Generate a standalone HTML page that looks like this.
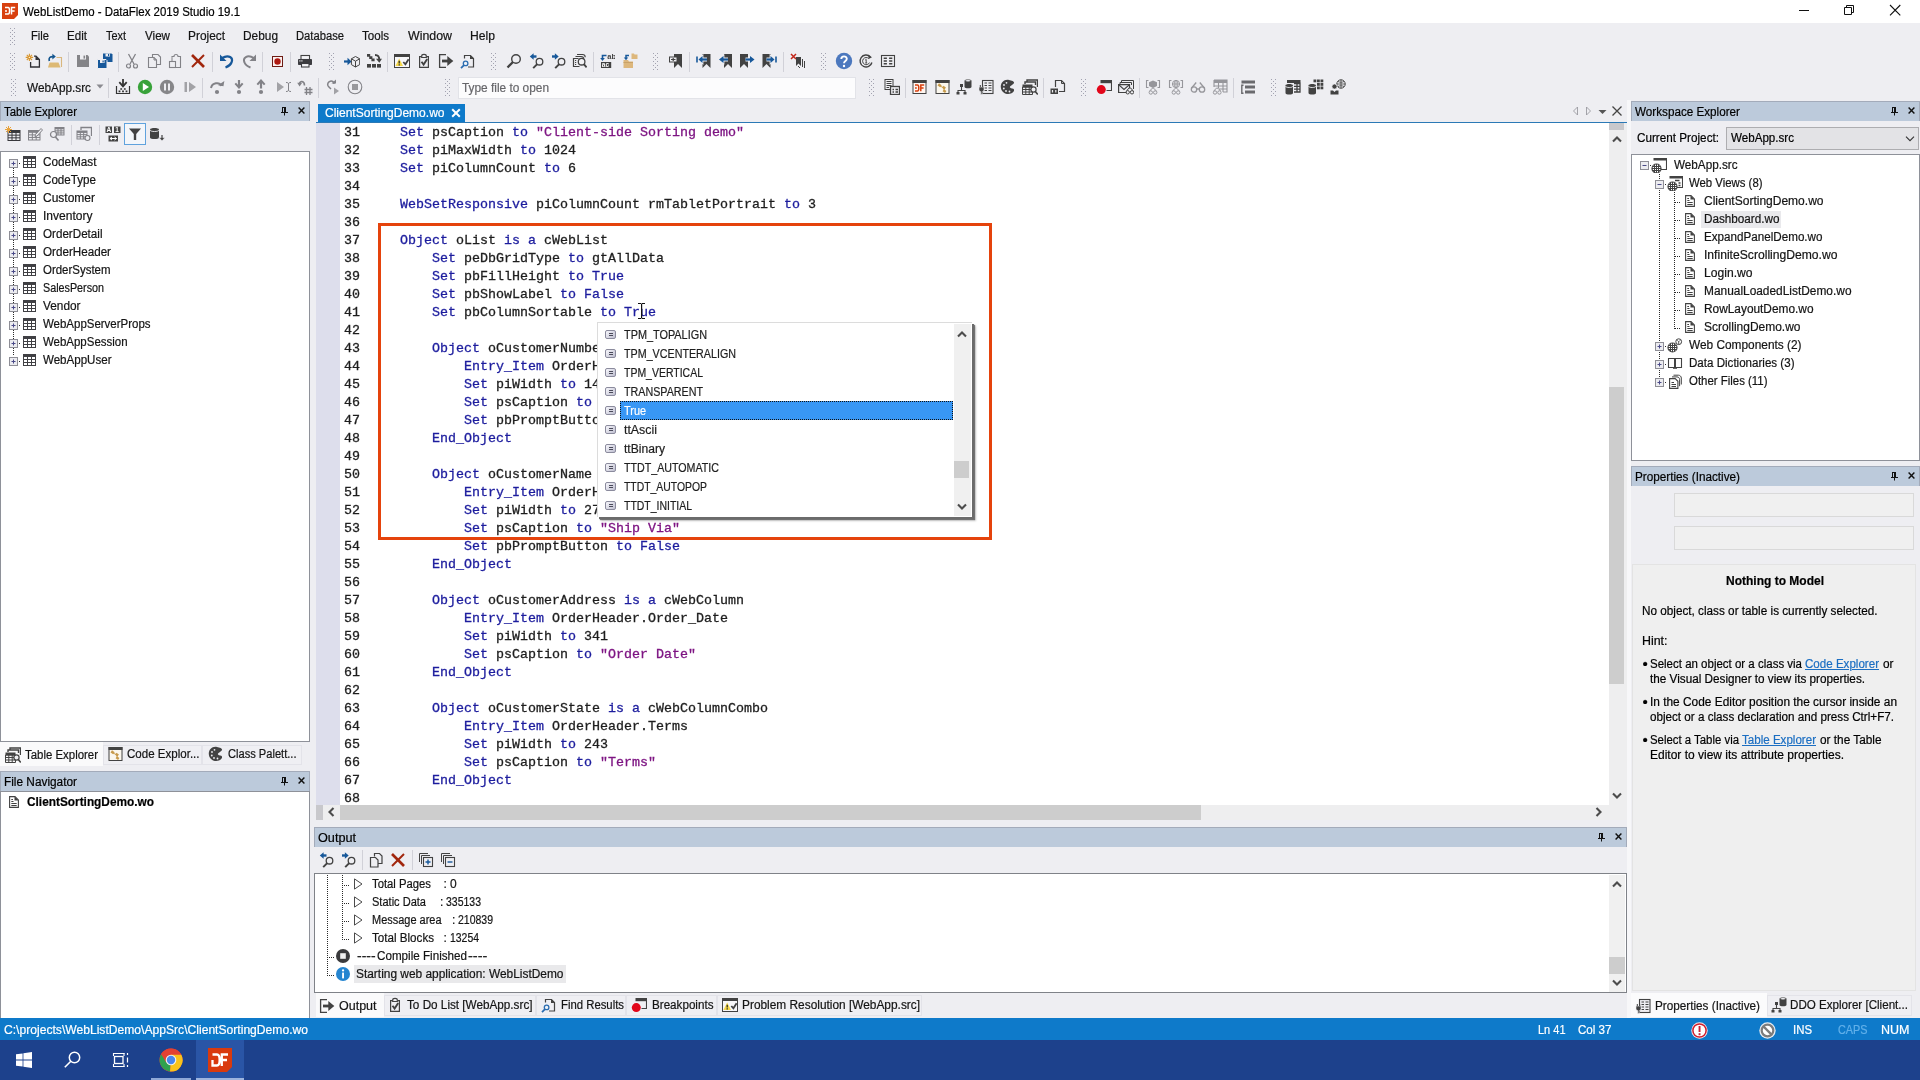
<!DOCTYPE html>
<html><head><meta charset="utf-8"><title>WebListDemo - DataFlex 2019 Studio 19.1</title>
<style>
html,body{margin:0;padding:0}
body{width:1920px;height:1080px;overflow:hidden;position:relative;background:#EEEEF2;font:12px 'Liberation Sans',sans-serif;color:#141414}
#root{position:absolute;left:0;top:0;width:1920px;height:1080px;will-change:transform}
.a{position:absolute;display:block}
.t{position:absolute;white-space:pre;line-height:18px;height:18px;font:12px 'Liberation Sans',sans-serif;line-height:18px;-webkit-text-stroke:0.2px;transform-origin:0 50%}
.c{position:absolute;white-space:pre;font:13.333px 'Liberation Mono',monospace;line-height:18px;height:18px;color:#1E1E1E;-webkit-text-stroke:0.3px}
.aci{width:11px;height:9px;box-sizing:border-box;border:1px solid #8B8B9D;border-radius:2px;background:linear-gradient(#4A4A5A,#4A4A5A) 3px 2px/4px 1px no-repeat,linear-gradient(#4A4A5A,#4A4A5A) 3px 4px/4px 1px no-repeat,linear-gradient(135deg,#F7F7FC,#BFBFD0)}
.grip{width:5px;background-image:radial-gradient(circle at .5px .5px,#A2A2B0 .65px,transparent .8px),radial-gradient(circle at 2.5px 2.5px,#A2A2B0 .65px,transparent .8px);background-size:4px 4px;}
.vdot{width:1px;background-image:repeating-linear-gradient(180deg,#2a2a2a 0,#2a2a2a 1px,transparent 1px,transparent 2px)}
.hdot{height:1px;background-image:repeating-linear-gradient(90deg,#2a2a2a 0,#2a2a2a 1px,transparent 1px,transparent 2px)}
</style></head>
<body>
<div id="root">
<div class="a" style="left:0px;top:0px;width:1920px;height:23px;background:#FFFFFF;"></div>
<svg class="a" style="left:2px;top:3px" width="16" height="16" viewBox="0 0 16 16"><path d="M0 0H16V12L12 16H0Z" fill="#D8400F"/><path d="M3 4.5H6.2C8 4.5 8 11 6.2 11H3M3 8H5 M9.5 11.5V4.5H13.2M9.5 8H12.6" stroke="#fff" stroke-width="1.5" fill="none"/></svg>
<span class="t" style="left:23px;top:3px;color:#000;transform:scaleX(0.9521);">WebListDemo - DataFlex 2019 Studio 19.1</span>
<svg class="a" style="left:1790px;top:0" width="120" height="23" viewBox="0 0 120 23"><path d="M9 10.5H19" stroke="#111" stroke-width="1"/><path d="M54.5 7.5H61.5V14.5H54.5Z M56.5 7.5V5.5H63.5V12.5H61.5" stroke="#111" fill="none"/><path d="M100 5L110.3 15.3M110.3 5L100 15.3" stroke="#111" stroke-width="1.1"/></svg>
<div class="a grip" style="left:10px;top:28px;height:18px"></div>
<span class="t" style="left:31px;top:27px;transform:scaleX(0.9305);">File</span>
<span class="t" style="left:67px;top:27px;transform:scaleX(0.9668);">Edit</span>
<span class="t" style="left:106px;top:27px;transform:scaleX(0.9084);">Text</span>
<span class="t" style="left:145px;top:27px;transform:scaleX(0.9691);">View</span>
<span class="t" style="left:188px;top:27px;transform:scaleX(0.9904);">Project</span>
<span class="t" style="left:243px;top:27px;transform:scaleX(0.9894);">Debug</span>
<span class="t" style="left:296px;top:27px;transform:scaleX(0.9343);">Database</span>
<span class="t" style="left:362px;top:27px;transform:scaleX(0.9637);">Tools</span>
<span class="t" style="left:408px;top:27px;transform:scaleX(1.0307);">Window</span>
<span class="t" style="left:470px;top:27px;transform:scaleX(1.0127);">Help</span>
<div class="a grip" style="left:10px;top:53px;height:18px"></div>
<svg class="a" style="left:25px;top:53px" width="16" height="16" viewBox="0 0 16 16"><path d="M5.6 9V14H14.4V6.5L11 3.2H9" fill="none" stroke="#303036" stroke-width="1.3"/><path d="M10.5 3V7H14.5Z" fill="#303036"/><path d="M4.4 0.7V8.1M0.7 4.4H8.1M1.8 1.8L7 7M7 1.8L1.8 7" stroke="#D9962F" stroke-width="1.1"/><circle cx="4.4" cy="4.4" r="1.6" fill="#D9962F"/><circle cx="4.4" cy="4.4" r=".7" fill="#FBEFD5"/></svg>
<svg class="a" style="left:47px;top:53px" width="16" height="16" viewBox="0 0 16 16"><path d="M9.5 4.5H14.5V14" fill="none" stroke="#D9B77E" stroke-width="1.1"/><path d="M2.5 9.5H11.5L13.5 14.5H1Z" fill="#DDB974"/><path d="M2.3 8C1.5 4.5 3 3.6 6.2 3.6" fill="none" stroke="#15568F" stroke-width="1.7"/><path d="M5.4 0.8L8.8 3.6L5.4 6.4Z" fill="#15568F"/></svg>
<div class="a" style="left:68px;top:52px;width:1px;height:20px;background:#D1D1D8;"></div>
<svg class="a" style="left:75px;top:53px" width="16" height="16" viewBox="0 0 16 16"><path d="M2 2H12.5L14 3.5V14H2Z" fill="#848488"/><rect x="5" y="2" width="6" height="4.5" fill="#EEEEF2"/><rect x="8.5" y="2.6" width="1.6" height="3" fill="#848488"/></svg>
<svg class="a" style="left:97px;top:53px" width="16" height="16" viewBox="0 0 16 16"><path d="M6 0.5H14.5L15.5 1.5V9H6Z" fill="#17589A"/><rect x="8.5" y="0.5" width="4.5" height="3" fill="#EEEEF2"/><rect x="11" y="1" width="1.2" height="2" fill="#17589A"/><path d="M0.5 6.5H9L10 7.5V15.5H0.5Z" fill="#17589A" stroke="#EEEEF2" stroke-width="1"/><rect x="3" y="7" width="4.5" height="3" fill="#EEEEF2"/><rect x="5.5" y="7.5" width="1.2" height="2" fill="#17589A"/></svg>
<div class="a" style="left:118px;top:52px;width:1px;height:20px;background:#D1D1D8;"></div>
<svg class="a" style="left:124px;top:53px" width="16" height="16" viewBox="0 0 16 16"><path d="M4.5 1L10 11M11.5 1L6 11" stroke="#828287" stroke-width="1.3" fill="none"/><circle cx="4.5" cy="13" r="2" fill="none" stroke="#828287" stroke-width="1.2"/><circle cx="11.5" cy="13" r="2" fill="none" stroke="#828287" stroke-width="1.2"/></svg>
<svg class="a" style="left:147px;top:53px" width="16" height="16" viewBox="0 0 16 16"><path d="M5.5 4.5V1.5H11L13.5 4V11.5H9.5" fill="none" stroke="#828287" stroke-width="1.1"/><path d="M1.5 4.5H7L9.5 7V14.5H1.5Z" fill="none" stroke="#828287" stroke-width="1.1"/><path d="M7 4.5V7H9.5" fill="none" stroke="#828287"/></svg>
<svg class="a" style="left:168px;top:53px" width="16" height="16" viewBox="0 0 16 16"><path d="M4 4.5V3.5H6C6 0.8 10 0.8 10 3.5H12.5V14.5H8" fill="none" stroke="#828287" stroke-width="1.1"/><rect x="1.5" y="8.5" width="6" height="6" fill="none" stroke="#828287" stroke-width="1.1"/><path d="M4 8.5V4.5" stroke="#828287"/></svg>
<svg class="a" style="left:190px;top:53px" width="16" height="16" viewBox="0 0 16 16"><path d="M2 2L14 14" stroke="#A1260D" stroke-width="2.6"/><path d="M14 2L2 14" stroke="#A1260D" stroke-width="2"/></svg>
<div class="a" style="left:212px;top:52px;width:1px;height:20px;background:#D1D1D8;"></div>
<svg class="a" style="left:219px;top:53px" width="16" height="16" viewBox="0 0 16 16"><path d="M3 5C10 1 14.5 5 12.5 9.5C11.5 12 9 13.5 6.5 14.5" fill="none" stroke="#17589A" stroke-width="2.2"/><path d="M1 1.5V8H7.5Z" fill="#17589A"/></svg>
<svg class="a" style="left:241px;top:53px" width="16" height="16" viewBox="0 0 16 16"><path d="M13 5C6 1 1.5 5 3.5 9.5C4.5 12 7 13.5 9.5 14.5" fill="none" stroke="#828287" stroke-width="2"/><path d="M15 1.5V8H8.5Z" fill="#828287"/></svg>
<div class="a" style="left:262px;top:52px;width:1px;height:20px;background:#D1D1D8;"></div>
<svg class="a" style="left:269px;top:53px" width="16" height="16" viewBox="0 0 16 16"><rect x="3.5" y="3.5" width="10" height="10" fill="#FBF0EF" stroke="#6E1C15" stroke-width="1"/><circle cx="8.5" cy="8.5" r="3.2" fill="#AE1810"/></svg>
<div class="a" style="left:290px;top:52px;width:1px;height:20px;background:#D1D1D8;"></div>
<svg class="a" style="left:297px;top:53px" width="16" height="16" viewBox="0 0 16 16"><rect x="4" y="2.5" width="8.5" height="4" fill="#F4F4F7" stroke="#424242" stroke-width="1.1"/><rect x="1" y="6" width="14" height="6" rx="0.8" fill="#3C3C40"/><rect x="4.5" y="10.5" width="7.5" height="3.5" fill="#F4F4F7" stroke="#3C3C40" stroke-width="1.1"/><rect x="2.3" y="7.3" width="1.2" height="1.2" fill="#EEEEF2"/><rect x="4.3" y="7.3" width="1.2" height="1.2" fill="#EEEEF2"/></svg>
<div class="a grip" style="left:329px;top:53px;height:18px"></div>
<svg class="a" style="left:344px;top:53px" width="16" height="16" viewBox="0 0 16 16"><path d="M0 8.5H5" stroke="#17589A" stroke-width="2.2"/><path d="M3.5 4.8L7.6 8.5L3.5 12.2Z" fill="#17589A"/><path d="M11.5 3.5L15.7 5.8V11.6L11.5 14L7.4 11.6V5.8Z M7.4 5.8L11.5 8.2L15.7 5.8M11.5 8.2V14" fill="none" stroke="#424242" stroke-width="1"/></svg>
<svg class="a" style="left:366px;top:53px" width="16" height="16" viewBox="0 0 16 16"><rect x="1" y="11" width="4" height="3.6" fill="#424242"/><rect x="6" y="11" width="4" height="3.6" fill="#424242"/><rect x="11" y="11" width="4" height="3.6" fill="#424242"/><path d="M1 1H4.2V3.2H6.4V5.4H8.6V8.2H5.4V6H3.2V3.8H1Z" fill="#424242"/><path d="M9 2C12.8 2 13.3 4 13.3 7" fill="none" stroke="#424242" stroke-width="2"/><path d="M10 5.8L13.3 9.8L16 5.8Z" fill="#424242"/></svg>
<div class="a" style="left:387px;top:52px;width:1px;height:20px;background:#D1D1D8;"></div>
<svg class="a" style="left:394px;top:53px" width="16" height="16" viewBox="0 0 16 16"><rect x="0.5" y="1.5" width="15" height="13" fill="#F7F7F9" stroke="#424242" stroke-width="1"/><rect x="0" y="1" width="16" height="3" fill="#424242"/><path d="M5.2 5.5L9 13H1.4Z" fill="#F6D94B"/><path d="M5.2 7.8V10.6M5.2 11.3V12.4" stroke="#222" stroke-width="1.2"/><path d="M9.3 9L11.4 11.3L14.6 6.2" fill="none" stroke="#424242" stroke-width="1.8"/></svg>
<svg class="a" style="left:416px;top:53px" width="16" height="16" viewBox="0 0 16 16"><path d="M5.5 3.6H3.6V14.4H12.4V3.6H10.5" fill="none" stroke="#424242" stroke-width="1.2"/><path d="M5.7 4.5V3C5.7 0.8 10.3 0.8 10.3 3V4.5Z" fill="none" stroke="#424242" stroke-width="1.2"/><path d="M5.5 8.8L7.6 11.6L11.2 6" fill="none" stroke="#424242" stroke-width="1.9"/></svg>
<svg class="a" style="left:438px;top:53px" width="16" height="16" viewBox="0 0 16 16"><path d="M8 1.6H1.6V14.4H8" fill="none" stroke="#424242" stroke-width="1.3"/><path d="M4 8H11" stroke="#424242" stroke-width="2.8"/><path d="M9.3 3L15.3 8L9.3 13Z" fill="#424242"/></svg>
<svg class="a" style="left:459px;top:53px" width="16" height="16" viewBox="0 0 16 16"><path d="M5.5 5.5V2.5H11.5L14.5 5.5V14H9" fill="none" stroke="#424242" stroke-width="1.2"/><path d="M11 2.2V6H14.8Z" fill="#424242"/><circle cx="6.6" cy="10.4" r="2.3" fill="#EEF3F9" stroke="#2B6CB0" stroke-width="1.3"/><path d="M5 12.2L2 15.2" stroke="#2B6CB0" stroke-width="1.8"/></svg>
<div class="a grip" style="left:491px;top:53px;height:18px"></div>
<svg class="a" style="left:506px;top:53px" width="16" height="16" viewBox="0 0 16 16"><circle cx="10" cy="6" r="4.3" fill="none" stroke="#424242" stroke-width="1.4"/><path d="M7 9L1.5 14.5" stroke="#424242" stroke-width="2.3"/></svg>
<svg class="a" style="left:529px;top:53px" width="16" height="16" viewBox="0 0 16 16"><circle cx="10.5" cy="8.7" r="3.3" fill="none" stroke="#424242" stroke-width="1.3"/><path d="M8.2 11.2L4.2 15.2" stroke="#424242" stroke-width="1.9"/><path d="M3 3.5H7.5" stroke="#17589A" stroke-width="2.4"/><path d="M4.6 0.2L0.8 3.5L4.6 6.8Z" fill="#17589A"/></svg>
<svg class="a" style="left:551px;top:53px" width="16" height="16" viewBox="0 0 16 16"><circle cx="10.5" cy="8.7" r="3.3" fill="none" stroke="#424242" stroke-width="1.3"/><path d="M8.2 11.2L4.2 15.2" stroke="#424242" stroke-width="1.9"/><path d="M1 3.5H5.5" stroke="#17589A" stroke-width="2.4"/><path d="M3.9 0.2L7.7 3.5L3.9 6.8Z" fill="#17589A"/></svg>
<svg class="a" style="left:571px;top:53px" width="16" height="16" viewBox="0 0 16 16"><path d="M6 1.5H11.5C13 1.5 14.2 2.7 14.2 4.2" fill="none" stroke="#424242" stroke-width="1.1"/><path d="M4.5 3.5H10C11.5 3.5 12.7 4.7 12.7 6" fill="none" stroke="#424242" stroke-width="1.1"/><path d="M7.5 5.5H2.5V13.5H8.5" fill="none" stroke="#424242" stroke-width="1.2"/><path d="M4 7.5H5.2M4 9.5H5.2M4 11.5H5.2" stroke="#424242" stroke-width="1.2"/><circle cx="10.6" cy="8.7" r="3.3" fill="#F2F2F5" stroke="#424242" stroke-width="1.3"/><path d="M12.9 11.2L15.6 14.4" stroke="#424242" stroke-width="1.9"/></svg>
<div class="a" style="left:593px;top:52px;width:1px;height:20px;background:#D1D1D8;"></div>
<svg class="a" style="left:599px;top:53px" width="16" height="16" viewBox="0 0 16 16"><text x="8.3" y="6" font-family="Liberation Sans" font-weight="bold" font-size="7.5" fill="#424242">ab</text><rect x="2" y="9" width="10.2" height="6" fill="#424242"/><text x="2.8" y="14.2" font-family="Liberation Sans" font-weight="bold" font-size="6.5" fill="#fff">ac</text><path d="M7.5 2.5H3.5V6" fill="none" stroke="#17589A" stroke-width="1.6"/><path d="M1.2 5L3.5 8L5.8 5Z" fill="#17589A"/></svg>
<svg class="a" style="left:622.5px;top:53px" width="16" height="16" viewBox="0 0 16 16"><path d="M8.5 0.5H11L11.5 1.5H14.5V6H8.5Z" fill="#DDB77C"/><path d="M0.5 7H5L6 8.5H10V15H0.5Z" fill="#DDB77C"/><rect x="0.5" y="9" width="9.5" height="1" fill="#C9A268"/><path d="M6 2.5H3V5.5" fill="none" stroke="#17589A" stroke-width="1.5"/><path d="M0.8 4.5L3 7.3L5.2 4.5Z" fill="#17589A"/></svg>
<div class="a grip" style="left:653px;top:53px;height:18px"></div>
<svg class="a" style="left:668px;top:53px" width="16" height="16" viewBox="0 0 16 16"><path d="M6 1H14V15L10 11L6 15Z" fill="#424242"/><rect x="1.5" y="4" width="7.5" height="5" fill="#EEEEF2" stroke="#424242" stroke-width="1"/><path d="M3 6.5H7.5M5.2 5V8" stroke="#424242" stroke-width="1.2"/></svg>
<div class="a" style="left:689px;top:52px;width:1px;height:20px;background:#D1D1D8;"></div>
<svg class="a" style="left:696px;top:53px" width="16" height="16" viewBox="0 0 16 16"><path d="M6.5 1H14.5V15L10.5 11L6.5 15Z" fill="#424242"/><path d="M5.5 6.5H11" stroke="#EEEEF2" stroke-width="4"/><path d="M6.5 3L2.5 6.5L6.5 10Z" fill="#EEEEF2" stroke="#EEEEF2" stroke-width="1.8"/><path d="M5.5 6.5H11" stroke="#17589A" stroke-width="2.2"/><path d="M6.5 3L2.5 6.5L6.5 10Z" fill="#17589A"/><path d="M1 3.5V9.5" stroke="#17589A" stroke-width="1.6"/></svg>
<svg class="a" style="left:718px;top:53px" width="16" height="16" viewBox="0 0 16 16"><path d="M6 1H14V15L10 11L6 15Z" fill="#424242"/><path d="M4.5 6.5H10" stroke="#EEEEF2" stroke-width="4"/><path d="M5.5 3L1 6.5L5.5 10Z" fill="#EEEEF2" stroke="#EEEEF2" stroke-width="1.8"/><path d="M4.5 6.5H10" stroke="#17589A" stroke-width="2.2"/><path d="M5.5 3L1 6.5L5.5 10Z" fill="#17589A"/></svg>
<svg class="a" style="left:739px;top:53px" width="16" height="16" viewBox="0 0 16 16"><path d="M1 1H9V15L5 11L1 15Z" fill="#424242"/><path d="M6.5 6.5H12" stroke="#EEEEF2" stroke-width="4"/><path d="M11 3L15.5 6.5L11 10Z" fill="#EEEEF2" stroke="#EEEEF2" stroke-width="1.8"/><path d="M6.5 6.5H12" stroke="#17589A" stroke-width="2.2"/><path d="M11 3L15.5 6.5L11 10Z" fill="#17589A"/></svg>
<svg class="a" style="left:761px;top:53px" width="16" height="16" viewBox="0 0 16 16"><path d="M1.5 1H9.5V15L5.5 11L1.5 15Z" fill="#424242"/><path d="M5.5 6.5H11" stroke="#EEEEF2" stroke-width="4"/><path d="M9.5 3L13.5 6.5L9.5 10Z" fill="#EEEEF2" stroke="#EEEEF2" stroke-width="1.8"/><path d="M5.5 6.5H11" stroke="#17589A" stroke-width="2.2"/><path d="M9.5 3L13.5 6.5L9.5 10Z" fill="#17589A"/><path d="M15 3.5V9.5" stroke="#17589A" stroke-width="1.6"/></svg>
<div class="a" style="left:783px;top:52px;width:1px;height:20px;background:#D1D1D8;"></div>
<svg class="a" style="left:790px;top:53px" width="16" height="16" viewBox="0 0 16 16"><path d="M1 1L6 6M6 1L1 6" stroke="#C2271A" stroke-width="1.5"/><path d="M6 4H11V13L8.5 10.5L6 13Z" fill="#424242"/><path d="M12.5 6V14M14.5 8V15" stroke="#424242" stroke-width="1"/><path d="M8 13L10 15" stroke="#424242"/></svg>
<div class="a grip" style="left:821px;top:53px;height:18px"></div>
<svg class="a" style="left:835px;top:52px" width="18" height="18" viewBox="0 0 18 18"><circle cx="9" cy="9" r="8.2" fill="#4C78BE"/><path d="M6.3 7C6.3 3.5 11.8 3.5 11.8 6.8C11.8 9 9 9 9 11.3" fill="none" stroke="#fff" stroke-width="1.9"/><circle cx="9" cy="14" r="1.2" fill="#fff"/></svg>
<svg class="a" style="left:858px;top:53px" width="16" height="16" viewBox="0 0 16 16"><path d="M12.3 3.7A6 6 0 1 0 13.9 9.5" fill="none" stroke="#424242" stroke-width="1.4"/><path d="M10.8 5.6A3.6 3.6 0 1 0 11.5 9.6" fill="none" stroke="#424242" stroke-width="1"/><path d="M8.2 6.3V10M7.2 7.2L8.2 6.3M7.2 10H9.2" stroke="#424242" stroke-width=".9" fill="none"/><path d="M10.2 1.8L14 4.2L10.6 6Z" fill="#424242"/></svg>
<svg class="a" style="left:880px;top:53px" width="16" height="16" viewBox="0 0 16 16"><rect x="1.5" y="2.5" width="13" height="11" fill="none" stroke="#424242" stroke-width="1.1"/><path d="M3.7 5.3H6.9M9.1 5.3H12.3M3.7 8H6.9M9.1 8H12.3M3.7 10.7H6.9M9.1 10.7H12.3" stroke="#424242" stroke-width="1.5"/></svg>
<div class="a grip" style="left:11px;top:79px;height:18px"></div>
<span class="t" style="left:27px;top:79px;transform:scaleX(0.9825);">WebApp.src</span>
<svg class="a" style="left:96px;top:84px" width="8" height="5"><path d="M0.5 0.5H7.5L4 4.5Z" fill="#8A8A90"/></svg>
<div class="a" style="left:108px;top:78px;width:1px;height:20px;background:#D1D1D8;"></div>
<svg class="a" style="left:115px;top:79px" width="16" height="16" viewBox="0 0 16 16"><path d="M8 0V6" stroke="#333" stroke-width="1.8"/><path d="M4.3 3.2L8 7.3L11.7 3.2" fill="none" stroke="#333" stroke-width="1.8"/><path d="M1.5 7V14.5H14.5V7" fill="none" stroke="#333" stroke-width="1.2"/><path d="M3.6 12.4H5.4M7.1 12.4H8.9M10.6 12.4H12.4M5.3 10H7.1M8.9 10H10.7" stroke="#333" stroke-width="1.7"/></svg>
<svg class="a" style="left:137px;top:79px" width="16" height="16" viewBox="0 0 16 16"><circle cx="8" cy="8" r="7.2" fill="#38A23A"/><path d="M5.8 4L12 8L5.8 12Z" fill="#fff"/></svg>
<svg class="a" style="left:159px;top:79px" width="16" height="16" viewBox="0 0 16 16"><circle cx="8" cy="8" r="7.2" fill="#868689"/><path d="M6 4.5V11.5M10 4.5V11.5" stroke="#EEEEF2" stroke-width="2"/></svg>
<svg class="a" style="left:181.5px;top:79px" width="16" height="16" viewBox="0 0 16 16"><rect x="2.5" y="3" width="2.5" height="10" fill="#A2A2A6"/><path d="M7 3L14 8L7 13Z" fill="#A2A2A6"/></svg>
<div class="a" style="left:202px;top:78px;width:1px;height:20px;background:#D1D1D8;"></div>
<svg class="a" style="left:209px;top:79px" width="16" height="16" viewBox="0 0 16 16"><path d="M2 9C3 3.5 10.5 2.5 12.3 7" fill="none" stroke="#828287" stroke-width="2"/><path d="M9.3 6.8H14.8V1.5Z" fill="#828287" transform="rotate(10 12 5)"/><circle cx="8" cy="13" r="2.1" fill="#828287"/></svg>
<svg class="a" style="left:231px;top:79px" width="16" height="16" viewBox="0 0 16 16"><path d="M8 1V7" stroke="#828287" stroke-width="2.2"/><path d="M4.3 4.3L8 8.5L11.7 4.3" fill="none" stroke="#828287" stroke-width="2"/><circle cx="8" cy="13" r="2.1" fill="#828287"/></svg>
<svg class="a" style="left:253px;top:79px" width="16" height="16" viewBox="0 0 16 16"><path d="M8 9.5V3" stroke="#828287" stroke-width="2.2"/><path d="M4.3 5.7L8 1.5L11.7 5.7" fill="none" stroke="#828287" stroke-width="2"/><circle cx="8" cy="13" r="2.1" fill="#828287"/></svg>
<svg class="a" style="left:276px;top:79px" width="16" height="16" viewBox="0 0 16 16"><path d="M1 3L8 8L1 13Z" fill="#A2A2A6"/><path d="M10 3.5C11.5 3.5 12.5 3.8 12.5 5V11C12.5 12.2 11.5 12.5 10 12.5M15 3.5C13.5 3.5 12.5 3.8 12.5 5M12.5 11C12.5 12.2 13.5 12.5 15 12.5" fill="none" stroke="#828287" stroke-width="1"/></svg>
<svg class="a" style="left:297px;top:79px" width="16" height="16" viewBox="0 0 16 16"><path d="M7.5 6.5C7.5 1.5 2.5 1.5 2.5 5" fill="none" stroke="#828287" stroke-width="1.6"/><path d="M0.2 3.8L2.6 7.6L5.2 3.8Z" fill="#828287"/><path d="M9.5 8V16M13 8V16M7.5 10.5H15.5M7.5 13.5H15.5" stroke="#828287" stroke-width="1.3"/></svg>
<div class="a" style="left:318px;top:78px;width:1px;height:20px;background:#D1D1D8;"></div>
<svg class="a" style="left:324.5px;top:79px" width="16" height="16" viewBox="0 0 16 16"><path d="M3 7C1 2 9 0 9 5" fill="none" stroke="#828287" stroke-width="1.5"/><path d="M6.5 4.5H11V0.5Z" fill="#828287"/><path d="M9 8.5L14 12L9 15.5Z" fill="#A2A2A6"/><path d="M3 7L6 10" stroke="#828287" stroke-width="1.5"/></svg>
<svg class="a" style="left:347px;top:79px" width="16" height="16" viewBox="0 0 16 16"><circle cx="8" cy="8" r="6.8" fill="none" stroke="#828287" stroke-width="1.1"/><rect x="5" y="5" width="6" height="6" fill="#98989C"/></svg>
<div class="a grip" style="left:445px;top:79px;height:18px"></div>
<div class="a grip" style="left:869px;top:79px;height:18px"></div>
<svg class="a" style="left:884px;top:79px" width="16" height="16" viewBox="0 0 16 16"><rect x="1" y="0.5" width="8" height="10" fill="#F4F4F7" stroke="#424242" stroke-width="1"/><path d="M2.5 2.5H7.5M2.5 4.5H7.5M2.5 6.5H7.5M2.5 8.5H5" stroke="#424242" stroke-width="1"/><rect x="6.5" y="7.5" width="9" height="8" fill="#EEEEF2" stroke="#424242" stroke-width="1.3"/><path d="M8.5 10.5H10M11.5 10.5H14M8.5 13H10M11.5 13H14" stroke="#424242" stroke-width="1.4"/></svg>
<div class="a" style="left:905px;top:78px;width:1px;height:20px;background:#D1D1D8;"></div>
<svg class="a" style="left:911px;top:79px" width="16" height="16" viewBox="0 0 16 16"><rect x="2" y="1.5" width="13" height="13" fill="#FFF6F1" stroke="#424242" stroke-width="1"/><rect x="1.5" y="1" width="14" height="3" fill="#424242"/><path d="M4 6H6.5C8.2 6 8.2 12 6.5 12H4M4 9H5.8M9.8 12.3V6H13.2M9.8 9H12.6" stroke="#D8400F" stroke-width="1.5" fill="none"/></svg>
<svg class="a" style="left:934px;top:79px" width="16" height="16" viewBox="0 0 16 16"><rect x="2" y="1.5" width="13" height="13" fill="#FBF7EE" stroke="#424242" stroke-width="1"/><rect x="1.5" y="1" width="14" height="3" fill="#424242"/><rect x="4" y="5" width="3.2" height="2.6" fill="#C79A4B" transform="rotate(35 5.6 6.3)"/><rect x="8.5" y="7.5" width="3" height="2.4" fill="#C79A4B" transform="rotate(35 10 8.7)"/><rect x="9" y="11" width="3" height="2.4" fill="#C79A4B" transform="rotate(35 10.5 12.2)"/><path d="M6 7L9.5 8.7L10.5 12" stroke="#C79A4B" fill="none" stroke-width=".9"/></svg>
<svg class="a" style="left:956px;top:79px" width="16" height="16" viewBox="0 0 16 16"><path d="M8.5 1.5C8.5 0 15.5 0 15.5 1.5V8C15.5 9.8 8.5 9.8 8.5 8Z" fill="#424242"/><ellipse cx="12" cy="1.8" rx="2.7" ry="0.8" fill="#EEEEF2"/><rect x="4" y="5" width="3" height="3" fill="#424242"/><path d="M5.5 8V11.5M2 14V11.5H9V14" stroke="#424242" stroke-width="1.1" fill="none"/><rect x="0.5" y="13" width="3" height="2.5" fill="#424242"/><rect x="7.5" y="13" width="3" height="2.5" fill="#424242"/></svg>
<svg class="a" style="left:978px;top:79px" width="16" height="16" viewBox="0 0 16 16"><rect x="4.5" y="1.5" width="10.5" height="13" fill="#EEEEF2" stroke="#424242" stroke-width="1.1"/><path d="M6.5 4H9M10.5 4H13.5M6.5 6.5H9M10.5 6.5H13.5M6.5 9H9M10.5 9H13.5M6.5 11.5H9M10.5 11.5H13.5" stroke="#424242" stroke-width="1.2"/><path d="M1 8H6V10.5C6 12 5 12.5 4.2 12.5V15.5H2.8V12.5C2 12.5 1 12 1 10.5Z" fill="#424242" stroke="#EEEEF2" stroke-width=".6"/><path d="M2.3 6V8M4.7 6V8" stroke="#424242" stroke-width="1"/></svg>
<svg class="a" style="left:1000px;top:79px" width="16" height="16" viewBox="0 0 16 16"><path d="M9 1C3 0 0 5 1 9.5C2 14 7 16 11 14.5C13 13.8 14.5 12 14 10.5C13.5 9 11 10 10 8.5C9 7 13 6 14 4C14.5 2.5 11.5 1.3 9 1Z" fill="#424242"/><circle cx="4" cy="6" r=".9" fill="#EEEEF2"/><circle cx="6.5" cy="3.8" r=".9" fill="#EEEEF2"/><circle cx="3.8" cy="9.5" r=".9" fill="#EEEEF2"/><circle cx="6" cy="12" r=".9" fill="#EEEEF2"/><circle cx="9.5" cy="12.5" r=".9" fill="#EEEEF2"/></svg>
<svg class="a" style="left:1022px;top:79px" width="16" height="16" viewBox="0 0 16 16"><path d="M5 3V1H15.5V8" fill="none" stroke="#424242" stroke-width="1.4"/><path d="M3 5V3H13.5V6" fill="none" stroke="#424242" stroke-width="1.4"/><rect x="0.5" y="5.5" width="10" height="3" fill="#424242"/><path d="M0.5 8H10.5V15.5H0.5ZM0.5 10.5H10.5M0.5 13H10.5M3.8 8V15.5M7.2 8V15.5" fill="none" stroke="#424242" stroke-width="1"/><circle cx="11.5" cy="10.5" r="2.6" fill="#EEEEF2" stroke="#424242" stroke-width="1.2"/><path d="M13.3 12.5L15.8 15.5" stroke="#424242" stroke-width="1.6"/></svg>
<div class="a" style="left:1043px;top:78px;width:1px;height:20px;background:#D1D1D8;"></div>
<svg class="a" style="left:1050px;top:79px" width="16" height="16" viewBox="0 0 16 16"><path d="M5.5 8V1.5H11.5L14.5 4.5V12.5H9" fill="none" stroke="#424242" stroke-width="1.2"/><path d="M11.5 1.5V4.5H14.5" fill="none" stroke="#424242"/><rect x="0.5" y="9.5" width="7.5" height="5.5" fill="#424242"/><path d="M2.5 11V13.5M5.8 11V13.5" stroke="#EEEEF2" stroke-width="1.2"/></svg>
<div class="a grip" style="left:1081px;top:79px;height:18px"></div>
<svg class="a" style="left:1096px;top:79px" width="16" height="16" viewBox="0 0 16 16"><path d="M5 2H15.5V11.5H10.5" fill="none" stroke="#424242" stroke-width="1.1"/><rect x="4.5" y="1" width="11.5" height="3.2" fill="#424242"/><circle cx="5.3" cy="10.6" r="4.5" fill="#E2061A"/></svg>
<svg class="a" style="left:1118px;top:79px" width="16" height="16" viewBox="0 0 16 16"><path d="M3.5 3V1.5H15.5V10" fill="none" stroke="#424242" stroke-width="1"/><path d="M2 5V3.5H13.5V6" fill="none" stroke="#424242" stroke-width="1"/><path d="M8.5 13.5H0.6V5.6H11.5V9" fill="none" stroke="#424242" stroke-width="1.2"/><path d="M0.6 5.6L6 10.5L11.5 5.6" fill="none" stroke="#424242" stroke-width="1.2"/><circle cx="9.7" cy="13.3" r="1.7" fill="none" stroke="#424242" stroke-width="1"/><circle cx="14" cy="13.3" r="1.7" fill="none" stroke="#424242" stroke-width="1"/><path d="M8.7 11.7L11 9H12.7L15 11.7" fill="none" stroke="#424242" stroke-width="1"/></svg>
<div class="a" style="left:1139px;top:78px;width:1px;height:20px;background:#D1D1D8;"></div>
<svg class="a" style="left:1145px;top:79px" width="16" height="16" viewBox="0 0 16 16"><path d="M3.5 1.5H1.5V8.5H3.5M12.5 1.5H14.5V8.5H12.5" fill="none" stroke="#96969B" stroke-width="1.1"/><path d="M8 1.5L12 3.3V7L8 9L4 7V3.3Z" fill="#96969B"/><circle cx="5.8" cy="13.5" r="1.7" fill="none" stroke="#96969B" stroke-width="1"/><circle cx="10.2" cy="13.5" r="1.7" fill="none" stroke="#96969B" stroke-width="1"/><path d="M4.5 12.2L7.3 9.2H8.7L11.5 12.2" fill="none" stroke="#96969B" stroke-width="1"/></svg>
<svg class="a" style="left:1168px;top:79px" width="16" height="16" viewBox="0 0 16 16"><path d="M3.5 1.5H1.5V8.5H3.5M12.5 1.5H14.5V8.5H12.5" fill="none" stroke="#96969B" stroke-width="1.1"/><circle cx="8" cy="5" r="3.6" fill="none" stroke="#96969B" stroke-width="1"/><path d="M4.4 5H11.6M8 1.4V8.6" stroke="#96969B" stroke-width=".9" fill="none"/><ellipse cx="8" cy="5" rx="1.8" ry="3.6" fill="none" stroke="#96969B" stroke-width=".8"/><circle cx="5.8" cy="13.5" r="1.7" fill="none" stroke="#96969B" stroke-width="1"/><circle cx="10.2" cy="13.5" r="1.7" fill="none" stroke="#96969B" stroke-width="1"/><path d="M4.5 12.2L7.3 9.2H8.7L11.5 12.2" fill="none" stroke="#96969B" stroke-width="1"/></svg>
<svg class="a" style="left:1190px;top:79px" width="16" height="16" viewBox="0 0 16 16"><circle cx="4" cy="10.5" r="2.7" fill="none" stroke="#96969B" stroke-width="1.3"/><circle cx="12" cy="10.5" r="2.7" fill="none" stroke="#96969B" stroke-width="1.3"/><path d="M1.2 9.5L6.2 3.5M14.8 9.5L9.8 3.5M6.5 10H9.5" fill="none" stroke="#96969B" stroke-width="1.3"/></svg>
<svg class="a" style="left:1212px;top:79px" width="16" height="16" viewBox="0 0 16 16"><rect x="2" y="1" width="13" height="3" fill="#96969B"/><path d="M2 1H15V13H11M2 1V8M2 7H15M6.5 4V9M11 4V13M7 10H15" fill="none" stroke="#96969B" stroke-width="1.1"/><circle cx="3" cy="13.5" r="1.7" fill="none" stroke="#96969B" stroke-width="1"/><circle cx="7.4" cy="13.5" r="1.7" fill="none" stroke="#96969B" stroke-width="1"/><path d="M1.8 12L4.3 9.2H6L8.6 12" fill="none" stroke="#96969B" stroke-width="1"/></svg>
<div class="a" style="left:1233px;top:78px;width:1px;height:20px;background:#D1D1D8;"></div>
<svg class="a" style="left:1240px;top:79px" width="16" height="16" viewBox="0 0 16 16"><path d="M1.5 3H15M5 8H15M5 13H15" stroke="#6A6A6E" stroke-width="2.8"/><path d="M3.5 6.2H1.8V14.3H3.5" fill="none" stroke="#6A6A6E" stroke-width="1.4"/></svg>
<div class="a grip" style="left:1271px;top:79px;height:18px"></div>
<svg class="a" style="left:1285px;top:79px" width="16" height="16" viewBox="0 0 16 16"><rect x="2" y="1" width="13.5" height="3" fill="#424242"/><path d="M9 4.5H15V13H9M12 4.5V13M9 7.3H15M9 10.2H15" fill="none" stroke="#424242" stroke-width="1.3"/><rect x="0" y="4" width="8.8" height="12" fill="#EEEEF2"/><path d="M0.5 6.5C0.5 4.5 8.0 4.5 8.0 6.5V14.0C8.0 16.0 0.5 16.0 0.5 14.0Z" fill="#424242"/><path d="M0.5 7C0.5 9 8.0 9 8.0 7" fill="none" stroke="#EEEEF2" stroke-width=".9"/></svg>
<svg class="a" style="left:1308px;top:79px" width="16" height="16" viewBox="0 0 16 16"><rect x="5.5" y="0.5" width="2.8" height="2.8" fill="#424242"/><rect x="9" y="0.5" width="2.8" height="2.8" fill="#424242"/><rect x="12.5" y="0.5" width="2.8" height="2.8" fill="#424242"/><rect x="9" y="4" width="2.8" height="2.8" fill="#424242"/><rect x="12.5" y="4" width="2.8" height="2.8" fill="#424242"/><rect x="9" y="7.5" width="2.8" height="2.8" fill="#424242"/><rect x="12.5" y="7.5" width="2.8" height="2.8" fill="#424242"/><rect x="0" y="4.5" width="8.8" height="11.5" fill="#EEEEF2"/><path d="M0.5 6.5C0.5 4.5 8.0 4.5 8.0 6.5V14.0C8.0 16.0 0.5 16.0 0.5 14.0Z" fill="#424242"/><path d="M0.5 7C0.5 9 8.0 9 8.0 7" fill="none" stroke="#EEEEF2" stroke-width=".9"/></svg>
<svg class="a" style="left:1330px;top:79px" width="16" height="16" viewBox="0 0 16 16"><circle cx="11" cy="5" r="4.2" fill="none" stroke="#424242" stroke-width="1"/><path d="M6.8 5H15.2M11 .8V9.2M8 2.5C10 3.5 12 3.5 14 2.5M8 7.5C10 6.5 12 6.5 14 7.5" fill="none" stroke="#424242" stroke-width=".8"/><circle cx="4.5" cy="7.5" r="2.6" fill="#424242" stroke="#EEEEF2" stroke-width=".8"/><path d="M0.5 15.5V11.5H3L4.5 13L6 11.5H8.5V15.5Z" fill="#424242"/></svg>
<div class="a" style="left:458px;top:77px;width:398px;height:22px;background:#FCFCFD;border:1px solid #E2E3E8;box-sizing:border-box;"></div>
<span class="t" style="left:462px;top:79px;color:#66666A;transform:scaleX(0.9879);">Type file to open</span>
<div class="a" style="left:0px;top:101px;width:310px;height:20px;background:#BCCADB;border-top:1px solid #A3ABBA;border-left:1px solid #A3ABBA;border-right:1px solid #A3ABBA;box-sizing:border-box;"></div>
<span class="t" style="left:4px;top:103px;color:#000;transform:scaleX(0.9515);">Table Explorer</span>
<svg class="a" style="left:281px;top:106px" width="7" height="10" viewBox="0 0 7 10"><path d="M1 1H5V6H3V2H2V6H1ZM0 6H7V7H0ZM3 7H4V9.5H3Z" fill="#111"/></svg>
<svg class="a" style="left:297.5px;top:107px" width="7" height="7" viewBox="0 0 7 7"><path d="M0.6 0.6L6.4 6.4M6.4 0.6L0.6 6.4" stroke="#111" stroke-width="1.45"/></svg>
<div class="a" style="left:124px;top:123px;width:22px;height:22px;background:#F3F6FA;border:1px solid #5FA2DD;box-sizing:border-box;"></div>
<svg class="a" style="left:5px;top:126px" width="16" height="16" viewBox="0 0 16 16"><rect x="2.5" y="4" width="13" height="11" fill="#38383C"/><rect x="3.50" y="6.97" width="3.00" height="1.68" fill="#EEEEF2"/><rect x="7.50" y="6.97" width="3.00" height="1.68" fill="#EEEEF2"/><rect x="11.50" y="6.97" width="3.00" height="1.68" fill="#EEEEF2"/><rect x="3.50" y="9.65" width="3.00" height="1.68" fill="#EEEEF2"/><rect x="7.50" y="9.65" width="3.00" height="1.68" fill="#EEEEF2"/><rect x="11.50" y="9.65" width="3.00" height="1.68" fill="#EEEEF2"/><rect x="3.50" y="12.32" width="3.00" height="1.68" fill="#EEEEF2"/><rect x="7.50" y="12.32" width="3.00" height="1.68" fill="#EEEEF2"/><rect x="11.50" y="12.32" width="3.00" height="1.68" fill="#EEEEF2"/><path d="M3.5 0V7M0 3.5H7M1 1L6 6M6 1L1 6" stroke="#E8A33B" stroke-width="1"/></svg>
<svg class="a" style="left:27px;top:126px" width="16" height="16" viewBox="0 0 16 16"><rect x="1" y="4" width="12.5" height="10.5" fill="#828287"/><rect x="2.00" y="6.83" width="2.83" height="1.55" fill="#EEEEF2"/><rect x="5.83" y="6.83" width="2.83" height="1.55" fill="#EEEEF2"/><rect x="9.67" y="6.83" width="2.83" height="1.55" fill="#EEEEF2"/><rect x="2.00" y="9.39" width="2.83" height="1.55" fill="#EEEEF2"/><rect x="5.83" y="9.39" width="2.83" height="1.55" fill="#EEEEF2"/><rect x="9.67" y="9.39" width="2.83" height="1.55" fill="#EEEEF2"/><rect x="2.00" y="11.95" width="2.83" height="1.55" fill="#EEEEF2"/><rect x="5.83" y="11.95" width="2.83" height="1.55" fill="#EEEEF2"/><rect x="9.67" y="11.95" width="2.83" height="1.55" fill="#EEEEF2"/><path d="M8.5 8.5L14 2.5L15.5 4L10 10L8 10.5Z" fill="#EEEEF2" stroke="#828287" stroke-width="1"/></svg>
<svg class="a" style="left:49px;top:126px" width="16" height="16" viewBox="0 0 16 16"><rect x="5.5" y="1" width="10" height="8.5" fill="#828287"/><rect x="6.50" y="3.29" width="2.00" height="1.07" fill="#EEEEF2"/><rect x="9.50" y="3.29" width="2.00" height="1.07" fill="#EEEEF2"/><rect x="12.50" y="3.29" width="2.00" height="1.07" fill="#EEEEF2"/><rect x="6.50" y="5.36" width="2.00" height="1.07" fill="#EEEEF2"/><rect x="9.50" y="5.36" width="2.00" height="1.07" fill="#EEEEF2"/><rect x="12.50" y="5.36" width="2.00" height="1.07" fill="#EEEEF2"/><rect x="6.50" y="7.43" width="2.00" height="1.07" fill="#EEEEF2"/><rect x="9.50" y="7.43" width="2.00" height="1.07" fill="#EEEEF2"/><rect x="12.50" y="7.43" width="2.00" height="1.07" fill="#EEEEF2"/><circle cx="4.5" cy="8.5" r="3" fill="#EEEEF2" stroke="#828287" stroke-width="1.2"/><path d="M6.5 11L9.5 14.5" stroke="#828287" stroke-width="1.6"/></svg>
<div class="a" style="left:71px;top:125px;width:1px;height:20px;background:#D1D1D8;"></div>
<svg class="a" style="left:76px;top:126px" width="16" height="16" viewBox="0 0 16 16"><path d="M5 4V1.5H15.5V10" fill="none" stroke="#828287" stroke-width="1.3"/><rect x="0.5" y="4.5" width="11" height="9" fill="#828287"/><rect x="1.50" y="6.93" width="2.33" height="1.19" fill="#EEEEF2"/><rect x="4.83" y="6.93" width="2.33" height="1.19" fill="#EEEEF2"/><rect x="8.17" y="6.93" width="2.33" height="1.19" fill="#EEEEF2"/><rect x="1.50" y="9.12" width="2.33" height="1.19" fill="#EEEEF2"/><rect x="4.83" y="9.12" width="2.33" height="1.19" fill="#EEEEF2"/><rect x="8.17" y="9.12" width="2.33" height="1.19" fill="#EEEEF2"/><rect x="1.50" y="11.31" width="2.33" height="1.19" fill="#EEEEF2"/><rect x="4.83" y="11.31" width="2.33" height="1.19" fill="#EEEEF2"/><rect x="8.17" y="11.31" width="2.33" height="1.19" fill="#EEEEF2"/><circle cx="11.5" cy="12" r="2.5" fill="#EEEEF2" stroke="#828287" stroke-width="1.1"/></svg>
<div class="a" style="left:99px;top:125px;width:1px;height:20px;background:#D1D1D8;"></div>
<svg class="a" style="left:105px;top:126px" width="16" height="16" viewBox="0 0 16 16"><rect x="0.5" y="0.5" width="6.5" height="6.5" fill="#424242"/><rect x="9" y="0.5" width="6.5" height="6.5" fill="#424242"/><text x="1.4" y="6.2" font-family="Liberation Sans" font-weight="bold" font-size="6.5" fill="#fff">A</text><text x="10.3" y="6.2" font-family="Liberation Sans" font-weight="bold" font-size="6.5" fill="#fff">1</text><rect x="3.5" y="9.5" width="9.5" height="6" fill="#424242"/><path d="M5 12.5H11.5M7 11L5 12.5L7 14M9.5 11L11.5 12.5L9.5 14" fill="none" stroke="#fff" stroke-width="1"/></svg>
<svg class="a" style="left:127px;top:126px" width="16" height="16" viewBox="0 0 16 16"><path d="M2 2.5H14L9.2 8V14H6.8V8Z" fill="#424242"/></svg>
<svg class="a" style="left:149px;top:126px" width="16" height="16" viewBox="0 0 16 16"><path d="M1 3.5C1 1.5 10 1.5 10 3.5V11.5C10 13.5 1 13.5 1 11.5Z" fill="#424242"/><path d="M1 4C1 6 10 6 10 4" fill="none" stroke="#EEEEF2" stroke-width=".9"/><path d="M10 11.5H16L13 15Z" fill="#424242" stroke="#EEEEF2" stroke-width=".7"/><path d="M13 9V12" stroke="#424242" stroke-width="1.2"/></svg>
<div class="a" style="left:0px;top:151px;width:310px;height:591px;background:#FFFFFF;border:1px solid #8E9199;box-sizing:border-box;"></div>
<div class="a vdot" style="left:13px;top:168px;height:188px"></div>
<div class="a hdot" style="left:19px;top:163px;width:2px"></div>
<svg class="a" style="left:9px;top:159px" width="9" height="9" viewBox="0 0 9 9"><rect x="0.5" y="0.5" width="8" height="8" fill="#ECECF0" stroke="#8E8E96"/><path d="M2.5 4.5H6.5M4.5 2.5V6.5" stroke="#4A4A88" stroke-width="1"/></svg>
<svg class="a" style="left:23px;top:156px" width="13" height="12" viewBox="0 0 13 12"><rect x="0" y="0" width="13" height="12" fill="#404044"/><rect x="1" y="3" width="3" height="2" fill="#fff"/><rect x="1" y="6" width="3" height="2" fill="#fff"/><rect x="1" y="9" width="3" height="2" fill="#fff"/><rect x="5" y="3" width="3" height="2" fill="#fff"/><rect x="5" y="6" width="3" height="2" fill="#fff"/><rect x="5" y="9" width="3" height="2" fill="#fff"/><rect x="9" y="3" width="3" height="2" fill="#fff"/><rect x="9" y="6" width="3" height="2" fill="#fff"/><rect x="9" y="9" width="3" height="2" fill="#fff"/></svg>
<span class="t" style="left:42.5px;top:153px;transform:scaleX(0.9780);">CodeMast</span>
<div class="a hdot" style="left:19px;top:181px;width:2px"></div>
<svg class="a" style="left:9px;top:177px" width="9" height="9" viewBox="0 0 9 9"><rect x="0.5" y="0.5" width="8" height="8" fill="#ECECF0" stroke="#8E8E96"/><path d="M2.5 4.5H6.5M4.5 2.5V6.5" stroke="#4A4A88" stroke-width="1"/></svg>
<svg class="a" style="left:23px;top:174px" width="13" height="12" viewBox="0 0 13 12"><rect x="0" y="0" width="13" height="12" fill="#404044"/><rect x="1" y="3" width="3" height="2" fill="#fff"/><rect x="1" y="6" width="3" height="2" fill="#fff"/><rect x="1" y="9" width="3" height="2" fill="#fff"/><rect x="5" y="3" width="3" height="2" fill="#fff"/><rect x="5" y="6" width="3" height="2" fill="#fff"/><rect x="5" y="9" width="3" height="2" fill="#fff"/><rect x="9" y="3" width="3" height="2" fill="#fff"/><rect x="9" y="6" width="3" height="2" fill="#fff"/><rect x="9" y="9" width="3" height="2" fill="#fff"/></svg>
<span class="t" style="left:42.5px;top:171px;transform:scaleX(0.9689);">CodeType</span>
<div class="a hdot" style="left:19px;top:199px;width:2px"></div>
<svg class="a" style="left:9px;top:195px" width="9" height="9" viewBox="0 0 9 9"><rect x="0.5" y="0.5" width="8" height="8" fill="#ECECF0" stroke="#8E8E96"/><path d="M2.5 4.5H6.5M4.5 2.5V6.5" stroke="#4A4A88" stroke-width="1"/></svg>
<svg class="a" style="left:23px;top:192px" width="13" height="12" viewBox="0 0 13 12"><rect x="0" y="0" width="13" height="12" fill="#404044"/><rect x="1" y="3" width="3" height="2" fill="#fff"/><rect x="1" y="6" width="3" height="2" fill="#fff"/><rect x="1" y="9" width="3" height="2" fill="#fff"/><rect x="5" y="3" width="3" height="2" fill="#fff"/><rect x="5" y="6" width="3" height="2" fill="#fff"/><rect x="5" y="9" width="3" height="2" fill="#fff"/><rect x="9" y="3" width="3" height="2" fill="#fff"/><rect x="9" y="6" width="3" height="2" fill="#fff"/><rect x="9" y="9" width="3" height="2" fill="#fff"/></svg>
<span class="t" style="left:42.5px;top:189px;transform:scaleX(0.9997);">Customer</span>
<div class="a hdot" style="left:19px;top:217px;width:2px"></div>
<svg class="a" style="left:9px;top:213px" width="9" height="9" viewBox="0 0 9 9"><rect x="0.5" y="0.5" width="8" height="8" fill="#ECECF0" stroke="#8E8E96"/><path d="M2.5 4.5H6.5M4.5 2.5V6.5" stroke="#4A4A88" stroke-width="1"/></svg>
<svg class="a" style="left:23px;top:210px" width="13" height="12" viewBox="0 0 13 12"><rect x="0" y="0" width="13" height="12" fill="#404044"/><rect x="1" y="3" width="3" height="2" fill="#fff"/><rect x="1" y="6" width="3" height="2" fill="#fff"/><rect x="1" y="9" width="3" height="2" fill="#fff"/><rect x="5" y="3" width="3" height="2" fill="#fff"/><rect x="5" y="6" width="3" height="2" fill="#fff"/><rect x="5" y="9" width="3" height="2" fill="#fff"/><rect x="9" y="3" width="3" height="2" fill="#fff"/><rect x="9" y="6" width="3" height="2" fill="#fff"/><rect x="9" y="9" width="3" height="2" fill="#fff"/></svg>
<span class="t" style="left:42.5px;top:207px;transform:scaleX(1.0028);">Inventory</span>
<div class="a hdot" style="left:19px;top:235px;width:2px"></div>
<svg class="a" style="left:9px;top:231px" width="9" height="9" viewBox="0 0 9 9"><rect x="0.5" y="0.5" width="8" height="8" fill="#ECECF0" stroke="#8E8E96"/><path d="M2.5 4.5H6.5M4.5 2.5V6.5" stroke="#4A4A88" stroke-width="1"/></svg>
<svg class="a" style="left:23px;top:228px" width="13" height="12" viewBox="0 0 13 12"><rect x="0" y="0" width="13" height="12" fill="#404044"/><rect x="1" y="3" width="3" height="2" fill="#fff"/><rect x="1" y="6" width="3" height="2" fill="#fff"/><rect x="1" y="9" width="3" height="2" fill="#fff"/><rect x="5" y="3" width="3" height="2" fill="#fff"/><rect x="5" y="6" width="3" height="2" fill="#fff"/><rect x="5" y="9" width="3" height="2" fill="#fff"/><rect x="9" y="3" width="3" height="2" fill="#fff"/><rect x="9" y="6" width="3" height="2" fill="#fff"/><rect x="9" y="9" width="3" height="2" fill="#fff"/></svg>
<span class="t" style="left:42.5px;top:225px;transform:scaleX(0.9697);">OrderDetail</span>
<div class="a hdot" style="left:19px;top:253px;width:2px"></div>
<svg class="a" style="left:9px;top:249px" width="9" height="9" viewBox="0 0 9 9"><rect x="0.5" y="0.5" width="8" height="8" fill="#ECECF0" stroke="#8E8E96"/><path d="M2.5 4.5H6.5M4.5 2.5V6.5" stroke="#4A4A88" stroke-width="1"/></svg>
<svg class="a" style="left:23px;top:246px" width="13" height="12" viewBox="0 0 13 12"><rect x="0" y="0" width="13" height="12" fill="#404044"/><rect x="1" y="3" width="3" height="2" fill="#fff"/><rect x="1" y="6" width="3" height="2" fill="#fff"/><rect x="1" y="9" width="3" height="2" fill="#fff"/><rect x="5" y="3" width="3" height="2" fill="#fff"/><rect x="5" y="6" width="3" height="2" fill="#fff"/><rect x="5" y="9" width="3" height="2" fill="#fff"/><rect x="9" y="3" width="3" height="2" fill="#fff"/><rect x="9" y="6" width="3" height="2" fill="#fff"/><rect x="9" y="9" width="3" height="2" fill="#fff"/></svg>
<span class="t" style="left:42.5px;top:243px;transform:scaleX(0.9710);">OrderHeader</span>
<div class="a hdot" style="left:19px;top:271px;width:2px"></div>
<svg class="a" style="left:9px;top:267px" width="9" height="9" viewBox="0 0 9 9"><rect x="0.5" y="0.5" width="8" height="8" fill="#ECECF0" stroke="#8E8E96"/><path d="M2.5 4.5H6.5M4.5 2.5V6.5" stroke="#4A4A88" stroke-width="1"/></svg>
<svg class="a" style="left:23px;top:264px" width="13" height="12" viewBox="0 0 13 12"><rect x="0" y="0" width="13" height="12" fill="#404044"/><rect x="1" y="3" width="3" height="2" fill="#fff"/><rect x="1" y="6" width="3" height="2" fill="#fff"/><rect x="1" y="9" width="3" height="2" fill="#fff"/><rect x="5" y="3" width="3" height="2" fill="#fff"/><rect x="5" y="6" width="3" height="2" fill="#fff"/><rect x="5" y="9" width="3" height="2" fill="#fff"/><rect x="9" y="3" width="3" height="2" fill="#fff"/><rect x="9" y="6" width="3" height="2" fill="#fff"/><rect x="9" y="9" width="3" height="2" fill="#fff"/></svg>
<span class="t" style="left:42.5px;top:261px;transform:scaleX(0.9549);">OrderSystem</span>
<div class="a hdot" style="left:19px;top:289px;width:2px"></div>
<svg class="a" style="left:9px;top:285px" width="9" height="9" viewBox="0 0 9 9"><rect x="0.5" y="0.5" width="8" height="8" fill="#ECECF0" stroke="#8E8E96"/><path d="M2.5 4.5H6.5M4.5 2.5V6.5" stroke="#4A4A88" stroke-width="1"/></svg>
<svg class="a" style="left:23px;top:282px" width="13" height="12" viewBox="0 0 13 12"><rect x="0" y="0" width="13" height="12" fill="#404044"/><rect x="1" y="3" width="3" height="2" fill="#fff"/><rect x="1" y="6" width="3" height="2" fill="#fff"/><rect x="1" y="9" width="3" height="2" fill="#fff"/><rect x="5" y="3" width="3" height="2" fill="#fff"/><rect x="5" y="6" width="3" height="2" fill="#fff"/><rect x="5" y="9" width="3" height="2" fill="#fff"/><rect x="9" y="3" width="3" height="2" fill="#fff"/><rect x="9" y="6" width="3" height="2" fill="#fff"/><rect x="9" y="9" width="3" height="2" fill="#fff"/></svg>
<span class="t" style="left:42.5px;top:279px;transform:scaleX(0.8964);">SalesPerson</span>
<div class="a hdot" style="left:19px;top:307px;width:2px"></div>
<svg class="a" style="left:9px;top:303px" width="9" height="9" viewBox="0 0 9 9"><rect x="0.5" y="0.5" width="8" height="8" fill="#ECECF0" stroke="#8E8E96"/><path d="M2.5 4.5H6.5M4.5 2.5V6.5" stroke="#4A4A88" stroke-width="1"/></svg>
<svg class="a" style="left:23px;top:300px" width="13" height="12" viewBox="0 0 13 12"><rect x="0" y="0" width="13" height="12" fill="#404044"/><rect x="1" y="3" width="3" height="2" fill="#fff"/><rect x="1" y="6" width="3" height="2" fill="#fff"/><rect x="1" y="9" width="3" height="2" fill="#fff"/><rect x="5" y="3" width="3" height="2" fill="#fff"/><rect x="5" y="6" width="3" height="2" fill="#fff"/><rect x="5" y="9" width="3" height="2" fill="#fff"/><rect x="9" y="3" width="3" height="2" fill="#fff"/><rect x="9" y="6" width="3" height="2" fill="#fff"/><rect x="9" y="9" width="3" height="2" fill="#fff"/></svg>
<span class="t" style="left:42.5px;top:297px;transform:scaleX(0.9856);">Vendor</span>
<div class="a hdot" style="left:19px;top:325px;width:2px"></div>
<svg class="a" style="left:9px;top:321px" width="9" height="9" viewBox="0 0 9 9"><rect x="0.5" y="0.5" width="8" height="8" fill="#ECECF0" stroke="#8E8E96"/><path d="M2.5 4.5H6.5M4.5 2.5V6.5" stroke="#4A4A88" stroke-width="1"/></svg>
<svg class="a" style="left:23px;top:318px" width="13" height="12" viewBox="0 0 13 12"><rect x="0" y="0" width="13" height="12" fill="#404044"/><rect x="1" y="3" width="3" height="2" fill="#fff"/><rect x="1" y="6" width="3" height="2" fill="#fff"/><rect x="1" y="9" width="3" height="2" fill="#fff"/><rect x="5" y="3" width="3" height="2" fill="#fff"/><rect x="5" y="6" width="3" height="2" fill="#fff"/><rect x="5" y="9" width="3" height="2" fill="#fff"/><rect x="9" y="3" width="3" height="2" fill="#fff"/><rect x="9" y="6" width="3" height="2" fill="#fff"/><rect x="9" y="9" width="3" height="2" fill="#fff"/></svg>
<span class="t" style="left:42.5px;top:315px;transform:scaleX(0.9556);">WebAppServerProps</span>
<div class="a hdot" style="left:19px;top:343px;width:2px"></div>
<svg class="a" style="left:9px;top:339px" width="9" height="9" viewBox="0 0 9 9"><rect x="0.5" y="0.5" width="8" height="8" fill="#ECECF0" stroke="#8E8E96"/><path d="M2.5 4.5H6.5M4.5 2.5V6.5" stroke="#4A4A88" stroke-width="1"/></svg>
<svg class="a" style="left:23px;top:336px" width="13" height="12" viewBox="0 0 13 12"><rect x="0" y="0" width="13" height="12" fill="#404044"/><rect x="1" y="3" width="3" height="2" fill="#fff"/><rect x="1" y="6" width="3" height="2" fill="#fff"/><rect x="1" y="9" width="3" height="2" fill="#fff"/><rect x="5" y="3" width="3" height="2" fill="#fff"/><rect x="5" y="6" width="3" height="2" fill="#fff"/><rect x="5" y="9" width="3" height="2" fill="#fff"/><rect x="9" y="3" width="3" height="2" fill="#fff"/><rect x="9" y="6" width="3" height="2" fill="#fff"/><rect x="9" y="9" width="3" height="2" fill="#fff"/></svg>
<span class="t" style="left:42.5px;top:333px;transform:scaleX(0.9548);">WebAppSession</span>
<div class="a hdot" style="left:19px;top:361px;width:2px"></div>
<svg class="a" style="left:9px;top:357px" width="9" height="9" viewBox="0 0 9 9"><rect x="0.5" y="0.5" width="8" height="8" fill="#ECECF0" stroke="#8E8E96"/><path d="M2.5 4.5H6.5M4.5 2.5V6.5" stroke="#4A4A88" stroke-width="1"/></svg>
<svg class="a" style="left:23px;top:354px" width="13" height="12" viewBox="0 0 13 12"><rect x="0" y="0" width="13" height="12" fill="#404044"/><rect x="1" y="3" width="3" height="2" fill="#fff"/><rect x="1" y="6" width="3" height="2" fill="#fff"/><rect x="1" y="9" width="3" height="2" fill="#fff"/><rect x="5" y="3" width="3" height="2" fill="#fff"/><rect x="5" y="6" width="3" height="2" fill="#fff"/><rect x="5" y="9" width="3" height="2" fill="#fff"/><rect x="9" y="3" width="3" height="2" fill="#fff"/><rect x="9" y="6" width="3" height="2" fill="#fff"/><rect x="9" y="9" width="3" height="2" fill="#fff"/></svg>
<span class="t" style="left:42.5px;top:351px;transform:scaleX(0.9627);">WebAppUser</span>
<div class="a" style="left:0px;top:742px;width:103px;height:24px;background:#FAFAFB;"></div>
<div class="a" style="left:103px;top:745px;width:99px;height:20px;background:#EFEFF3;border:1px solid #E3E3E9;box-sizing:border-box;"></div>
<div class="a" style="left:202px;top:745px;width:100px;height:20px;background:#EFEFF3;border:1px solid #E3E3E9;box-sizing:border-box;"></div>
<svg class="a" style="left:5px;top:747px" width="16" height="16" viewBox="0 0 16 16"><path d="M5 3V1H15.5V8" fill="none" stroke="#424242" stroke-width="1.4"/><path d="M3 5V3H13.5V6" fill="none" stroke="#424242" stroke-width="1.4"/><rect x="0.5" y="5.5" width="10" height="3" fill="#424242"/><path d="M0.5 8H10.5V15.5H0.5ZM0.5 10.5H10.5M0.5 13H10.5M3.8 8V15.5M7.2 8V15.5" fill="none" stroke="#424242" stroke-width="1"/><circle cx="11.5" cy="10.5" r="2.6" fill="#EEEEF2" stroke="#424242" stroke-width="1.2"/><path d="M13.3 12.5L15.8 15.5" stroke="#424242" stroke-width="1.6"/></svg>
<span class="t" style="left:24.5px;top:746px;transform:scaleX(0.9515);">Table Explorer</span>
<svg class="a" style="left:107px;top:746px" width="16" height="16" viewBox="0 0 16 16"><rect x="2" y="1.5" width="13" height="13" fill="#FBF7EE" stroke="#424242" stroke-width="1"/><rect x="1.5" y="1" width="14" height="3" fill="#424242"/><rect x="4" y="5" width="3.2" height="2.6" fill="#C79A4B" transform="rotate(35 5.6 6.3)"/><rect x="8.5" y="7.5" width="3" height="2.4" fill="#C79A4B" transform="rotate(35 10 8.7)"/><rect x="9" y="11" width="3" height="2.4" fill="#C79A4B" transform="rotate(35 10.5 12.2)"/><path d="M6 7L9.5 8.7L10.5 12" stroke="#C79A4B" fill="none" stroke-width=".9"/></svg>
<span class="t" style="left:126.5px;top:745px;transform:scaleX(0.9619);">Code Explor...</span>
<svg class="a" style="left:208px;top:746px" width="16" height="16" viewBox="0 0 16 16"><path d="M9 1C3 0 0 5 1 9.5C2 14 7 16 11 14.5C13 13.8 14.5 12 14 10.5C13.5 9 11 10 10 8.5C9 7 13 6 14 4C14.5 2.5 11.5 1.3 9 1Z" fill="#424242"/><circle cx="4" cy="6" r=".9" fill="#EEEEF2"/><circle cx="6.5" cy="3.8" r=".9" fill="#EEEEF2"/><circle cx="3.8" cy="9.5" r=".9" fill="#EEEEF2"/><circle cx="6" cy="12" r=".9" fill="#EEEEF2"/><circle cx="9.5" cy="12.5" r=".9" fill="#EEEEF2"/></svg>
<span class="t" style="left:227.5px;top:745px;transform:scaleX(0.9253);">Class Palett...</span>
<div class="a" style="left:0px;top:771px;width:310px;height:20px;background:#BCCADB;border-top:1px solid #A3ABBA;border-left:1px solid #A3ABBA;border-right:1px solid #A3ABBA;box-sizing:border-box;"></div>
<span class="t" style="left:4px;top:773px;color:#000;transform:scaleX(0.9861);">File Navigator</span>
<svg class="a" style="left:281px;top:776px" width="7" height="10" viewBox="0 0 7 10"><path d="M1 1H5V6H3V2H2V6H1ZM0 6H7V7H0ZM3 7H4V9.5H3Z" fill="#111"/></svg>
<svg class="a" style="left:297.5px;top:777px" width="7" height="7" viewBox="0 0 7 7"><path d="M0.6 0.6L6.4 6.4M6.4 0.6L0.6 6.4" stroke="#111" stroke-width="1.45"/></svg>
<div class="a" style="left:0px;top:791px;width:310px;height:227px;background:#FFFFFF;border:1px solid #8E9199;box-sizing:border-box;border-bottom:none;"></div>
<svg class="a" style="left:9px;top:796px" width="10" height="12" viewBox="0 0 10 12"><path d="M0.6 0.6H6L9.4 4V11.4H0.6Z" fill="#fff" stroke="#424242" stroke-width="1.1"/><path d="M5.5 0.5V4.5H9.5Z" fill="#424242"/><path d="M2.3 5.5H4.5M2.3 7.5H7.7M2.3 9.5H7.7" stroke="#424242" stroke-width="1"/><path d="M2.3 3.5H4" stroke="#424242" stroke-width="1"/></svg>
<span class="t" style="left:27px;top:793px;color:#000;font-weight:bold;transform:scaleX(0.9870);">ClientSortingDemo.wo</span>
<div class="a" style="left:318px;top:104px;width:147px;height:19px;background:#0E7ACA;"></div>
<span class="t" style="left:324.5px;top:103.7px;color:#FFFFFF;transform:scaleX(1.0009);">ClientSortingDemo.wo</span>
<svg class="a" style="left:451px;top:108px" width="10" height="10" viewBox="0 0 10 10"><path d="M1.2 1.2L8.8 8.8M8.8 1.2L1.2 8.8" stroke="#fff" stroke-width="2"/></svg>
<div class="a" style="left:316px;top:122px;width:1311px;height:1px;background:#2B79B6;"></div>
<svg class="a" style="left:1568px;top:104px" width="58" height="14" viewBox="0 0 58 14"><path d="M9.5 3L5.5 7L9.5 11Z" stroke="#9A9AA0" fill="none" stroke-width="0.9"/><path d="M18.5 3L22.5 7L18.5 11Z" stroke="#9A9AA0" fill="none" stroke-width="0.9"/><path d="M30.5 6H38.5L34.5 10Z" fill="#555"/><path d="M44.5 2.5L53.5 11.5M53.5 2.5L44.5 11.5" stroke="#444" stroke-width="1.3"/></svg>
<div class="a" style="left:316px;top:123px;width:1311px;height:697px;background:#FFFFFF;"></div>
<div class="a" style="left:316px;top:123px;width:24px;height:682px;background:#DDDEEC;"></div>
<span class="c" style="left:344px;top:123.5px;color:#1E1E1E">31</span>
<span class="c" style="left:400px;top:123.5px"><span style="color:#1D1D9E">Set</span><span style="color:#1E1E1E"> psCaption </span><span style="color:#1D1D9E">to</span> <span style="color:#7E1583">&quot;Client-side Sorting demo&quot;</span></span>
<span class="c" style="left:344px;top:141.5px;color:#1E1E1E">32</span>
<span class="c" style="left:400px;top:141.5px"><span style="color:#1D1D9E">Set</span><span style="color:#1E1E1E"> piMaxWidth </span><span style="color:#1D1D9E">to</span><span style="color:#1E1E1E"> 1024</span></span>
<span class="c" style="left:344px;top:159.5px;color:#1E1E1E">33</span>
<span class="c" style="left:400px;top:159.5px"><span style="color:#1D1D9E">Set</span><span style="color:#1E1E1E"> piColumnCount </span><span style="color:#1D1D9E">to</span><span style="color:#1E1E1E"> 6</span></span>
<span class="c" style="left:344px;top:177.5px;color:#1E1E1E">34</span>
<span class="c" style="left:344px;top:195.5px;color:#1E1E1E">35</span>
<span class="c" style="left:400px;top:195.5px"><span style="color:#1D1D9E">WebSetResponsive</span><span style="color:#1E1E1E"> piColumnCount rmTabletPortrait </span><span style="color:#1D1D9E">to</span><span style="color:#1E1E1E"> 3</span></span>
<span class="c" style="left:344px;top:213.5px;color:#1E1E1E">36</span>
<span class="c" style="left:344px;top:231.5px;color:#1E1E1E">37</span>
<span class="c" style="left:400px;top:231.5px"><span style="color:#1D1D9E">Object</span><span style="color:#1E1E1E"> oList </span><span style="color:#1D1D9E">is a</span><span style="color:#1E1E1E"> cWebList</span></span>
<span class="c" style="left:344px;top:249.5px;color:#1E1E1E">38</span>
<span class="c" style="left:432px;top:249.5px"><span style="color:#1D1D9E">Set</span><span style="color:#1E1E1E"> peDbGridType </span><span style="color:#1D1D9E">to</span><span style="color:#1E1E1E"> gtAllData</span></span>
<span class="c" style="left:344px;top:267.5px;color:#1E1E1E">39</span>
<span class="c" style="left:432px;top:267.5px"><span style="color:#1D1D9E">Set</span><span style="color:#1E1E1E"> pbFillHeight </span><span style="color:#1D1D9E">to True</span></span>
<span class="c" style="left:344px;top:285.5px;color:#1E1E1E">40</span>
<span class="c" style="left:432px;top:285.5px"><span style="color:#1D1D9E">Set</span><span style="color:#1E1E1E"> pbShowLabel </span><span style="color:#1D1D9E">to False</span></span>
<span class="c" style="left:344px;top:303.5px;color:#1E1E1E">41</span>
<span class="c" style="left:432px;top:303.5px"><span style="color:#1D1D9E">Set</span><span style="color:#1E1E1E"> pbColumnSortable </span><span style="color:#1D1D9E">to True</span></span>
<span class="c" style="left:344px;top:321.5px;color:#1E1E1E">42</span>
<span class="c" style="left:344px;top:339.5px;color:#1E1E1E">43</span>
<span class="c" style="left:432px;top:339.5px"><span style="color:#1D1D9E">Object</span><span style="color:#1E1E1E"> oCustomerNumber </span><span style="color:#1D1D9E">is a</span><span style="color:#1E1E1E"> cWebColumn</span></span>
<span class="c" style="left:344px;top:357.5px;color:#1E1E1E">44</span>
<span class="c" style="left:464px;top:357.5px"><span style="color:#1D1D9E">Entry_Item</span><span style="color:#1E1E1E"> OrderHeader.Order_Number</span></span>
<span class="c" style="left:344px;top:375.5px;color:#1E1E1E">45</span>
<span class="c" style="left:464px;top:375.5px"><span style="color:#1D1D9E">Set</span><span style="color:#1E1E1E"> piWidth </span><span style="color:#1D1D9E">to</span><span style="color:#1E1E1E"> 145</span></span>
<span class="c" style="left:344px;top:393.5px;color:#1E1E1E">46</span>
<span class="c" style="left:464px;top:393.5px"><span style="color:#1D1D9E">Set</span><span style="color:#1E1E1E"> psCaption </span><span style="color:#1D1D9E">to</span> <span style="color:#7E1583">&quot;Order Number&quot;</span></span>
<span class="c" style="left:344px;top:411.5px;color:#1E1E1E">47</span>
<span class="c" style="left:464px;top:411.5px"><span style="color:#1D1D9E">Set</span><span style="color:#1E1E1E"> pbPromptButton </span><span style="color:#1D1D9E">to False</span></span>
<span class="c" style="left:344px;top:429.5px;color:#1E1E1E">48</span>
<span class="c" style="left:432px;top:429.5px"><span style="color:#1D1D9E">End_Object</span></span>
<span class="c" style="left:344px;top:447.5px;color:#1E1E1E">49</span>
<span class="c" style="left:344px;top:465.5px;color:#1E1E1E">50</span>
<span class="c" style="left:432px;top:465.5px"><span style="color:#1D1D9E">Object</span><span style="color:#1E1E1E"> oCustomerName </span><span style="color:#1D1D9E">is a</span><span style="color:#1E1E1E"> cWebColumn</span></span>
<span class="c" style="left:344px;top:483.5px;color:#1E1E1E">51</span>
<span class="c" style="left:464px;top:483.5px"><span style="color:#1D1D9E">Entry_Item</span><span style="color:#1E1E1E"> OrderHeader.Ship_Via</span></span>
<span class="c" style="left:344px;top:501.5px;color:#1E1E1E">52</span>
<span class="c" style="left:464px;top:501.5px"><span style="color:#1D1D9E">Set</span><span style="color:#1E1E1E"> piWidth </span><span style="color:#1D1D9E">to</span><span style="color:#1E1E1E"> 273</span></span>
<span class="c" style="left:344px;top:519.5px;color:#1E1E1E">53</span>
<span class="c" style="left:464px;top:519.5px"><span style="color:#1D1D9E">Set</span><span style="color:#1E1E1E"> psCaption </span><span style="color:#1D1D9E">to</span> <span style="color:#7E1583">&quot;Ship Via&quot;</span></span>
<span class="c" style="left:344px;top:537.5px;color:#1E1E1E">54</span>
<span class="c" style="left:464px;top:537.5px"><span style="color:#1D1D9E">Set</span><span style="color:#1E1E1E"> pbPromptButton </span><span style="color:#1D1D9E">to False</span></span>
<span class="c" style="left:344px;top:555.5px;color:#1E1E1E">55</span>
<span class="c" style="left:432px;top:555.5px"><span style="color:#1D1D9E">End_Object</span></span>
<span class="c" style="left:344px;top:573.5px;color:#1E1E1E">56</span>
<span class="c" style="left:344px;top:591.5px;color:#1E1E1E">57</span>
<span class="c" style="left:432px;top:591.5px"><span style="color:#1D1D9E">Object</span><span style="color:#1E1E1E"> oCustomerAddress </span><span style="color:#1D1D9E">is a</span><span style="color:#1E1E1E"> cWebColumn</span></span>
<span class="c" style="left:344px;top:609.5px;color:#1E1E1E">58</span>
<span class="c" style="left:464px;top:609.5px"><span style="color:#1D1D9E">Entry_Item</span><span style="color:#1E1E1E"> OrderHeader.Order_Date</span></span>
<span class="c" style="left:344px;top:627.5px;color:#1E1E1E">59</span>
<span class="c" style="left:464px;top:627.5px"><span style="color:#1D1D9E">Set</span><span style="color:#1E1E1E"> piWidth </span><span style="color:#1D1D9E">to</span><span style="color:#1E1E1E"> 341</span></span>
<span class="c" style="left:344px;top:645.5px;color:#1E1E1E">60</span>
<span class="c" style="left:464px;top:645.5px"><span style="color:#1D1D9E">Set</span><span style="color:#1E1E1E"> psCaption </span><span style="color:#1D1D9E">to</span> <span style="color:#7E1583">&quot;Order Date&quot;</span></span>
<span class="c" style="left:344px;top:663.5px;color:#1E1E1E">61</span>
<span class="c" style="left:432px;top:663.5px"><span style="color:#1D1D9E">End_Object</span></span>
<span class="c" style="left:344px;top:681.5px;color:#1E1E1E">62</span>
<span class="c" style="left:344px;top:699.5px;color:#1E1E1E">63</span>
<span class="c" style="left:432px;top:699.5px"><span style="color:#1D1D9E">Object</span><span style="color:#1E1E1E"> oCustomerState </span><span style="color:#1D1D9E">is a</span><span style="color:#1E1E1E"> cWebColumnCombo</span></span>
<span class="c" style="left:344px;top:717.5px;color:#1E1E1E">64</span>
<span class="c" style="left:464px;top:717.5px"><span style="color:#1D1D9E">Entry_Item</span><span style="color:#1E1E1E"> OrderHeader.Terms</span></span>
<span class="c" style="left:344px;top:735.5px;color:#1E1E1E">65</span>
<span class="c" style="left:464px;top:735.5px"><span style="color:#1D1D9E">Set</span><span style="color:#1E1E1E"> piWidth </span><span style="color:#1D1D9E">to</span><span style="color:#1E1E1E"> 243</span></span>
<span class="c" style="left:344px;top:753.5px;color:#1E1E1E">66</span>
<span class="c" style="left:464px;top:753.5px"><span style="color:#1D1D9E">Set</span><span style="color:#1E1E1E"> psCaption </span><span style="color:#1D1D9E">to</span> <span style="color:#7E1583">&quot;Terms&quot;</span></span>
<span class="c" style="left:344px;top:771.5px;color:#1E1E1E">67</span>
<span class="c" style="left:432px;top:771.5px"><span style="color:#1D1D9E">End_Object</span></span>
<span class="c" style="left:344px;top:789.5px;color:#1E1E1E">68</span>
<div class="a" style="left:378px;top:223px;width:614px;height:317px;border:3px solid #E5430C;box-sizing:border-box;"></div>
<svg class="a" style="left:638px;top:303px" width="7" height="16" viewBox="0 0 7 16"><path d="M0 0H3V1H0ZM4 0H7V1H4ZM3 0.6H4.2V15.4H3ZM0 15H3V16H0ZM4 15H7V16H4Z" fill="#111"/></svg>
<div class="a" style="left:1609px;top:123px;width:18px;height:682px;background:#EEEEEF;"></div>
<div class="a" style="left:1609px;top:123px;width:15px;height:7px;background:#C8C8CC;"></div>
<div class="a" style="left:1609px;top:387px;width:15px;height:297px;background:#CDCDCD;"></div>
<svg class="a" style="left:1612px;top:135px" width="10" height="8"><path d="M1 6.5L5 2.5L9 6.5" stroke="#4C4C4C" stroke-width="2.1" fill="none"/></svg>
<svg class="a" style="left:1612px;top:792px" width="10" height="8"><path d="M1 1.5L5 5.5L9 1.5" stroke="#4C4C4C" stroke-width="2.1" fill="none"/></svg>
<div class="a" style="left:316px;top:805px;width:1311px;height:15px;background:#EEEEEF;"></div>
<div class="a" style="left:316px;top:805px;width:7px;height:15px;background:#C8C8CC;"></div>
<div class="a" style="left:340px;top:805px;width:861px;height:15px;background:#CDCDCD;"></div>
<svg class="a" style="left:327px;top:807px" width="8" height="10"><path d="M6.5 1L2.5 5L6.5 9" stroke="#4C4C4C" stroke-width="2.1" fill="none"/></svg>
<svg class="a" style="left:1595px;top:807px" width="8" height="10"><path d="M1.5 1L5.5 5L1.5 9" stroke="#4C4C4C" stroke-width="2.1" fill="none"/></svg>
<div class="a" style="left:597px;top:322px;width:375px;height:195px;background:#FFFFFF;border-top:1px solid #DCDCDC;border-left:1px solid #DCDCDC;box-sizing:border-box;box-shadow:2px 2px 0 0 #6B6B6B,3px 3px 1px 0 rgba(80,80,80,.75),4px 4px 2px 0 rgba(0,0,0,.2);"></div>
<div class="a" style="left:954px;top:324px;width:17px;height:192px;background:#F0F0F0;"></div>
<div class="a" style="left:954px;top:461px;width:15px;height:17px;background:#CDCDCD;"></div>
<svg class="a" style="left:957px;top:330px" width="10" height="8"><path d="M1 6.5L5 2.5L9 6.5" stroke="#4C4C4C" stroke-width="2.1" fill="none"/></svg>
<svg class="a" style="left:957px;top:503px" width="10" height="8"><path d="M1 1.5L5 5.5L9 1.5" stroke="#4C4C4C" stroke-width="2.1" fill="none"/></svg>
<div class="a aci" style="left:605px;top:330px"></div>
<span class="t" style="left:624px;top:325.5px;color:#1E1E1E;transform:scaleX(0.9063);">TPM_TOPALIGN</span>
<div class="a aci" style="left:605px;top:349px"></div>
<span class="t" style="left:624px;top:344.5px;color:#1E1E1E;transform:scaleX(0.8934);">TPM_VCENTERALIGN</span>
<div class="a aci" style="left:605px;top:368px"></div>
<span class="t" style="left:624px;top:363.5px;color:#1E1E1E;transform:scaleX(0.8732);">TPM_VERTICAL</span>
<div class="a aci" style="left:605px;top:387px"></div>
<span class="t" style="left:624px;top:382.5px;color:#1E1E1E;transform:scaleX(0.8931);">TRANSPARENT</span>
<div class="a" style="left:620px;top:401px;width:333px;height:19px;background:#3897F5;border:1px dotted #111;box-sizing:border-box;"></div>
<div class="a aci" style="left:605px;top:406px"></div>
<span class="t" style="left:624px;top:401.5px;color:#FFFFFF;transform:scaleX(0.9078);">True</span>
<div class="a aci" style="left:605px;top:425px"></div>
<span class="t" style="left:624px;top:420.5px;color:#1E1E1E;transform:scaleX(1.0307);">ttAscii</span>
<div class="a aci" style="left:605px;top:444px"></div>
<span class="t" style="left:624px;top:439.5px;color:#1E1E1E;transform:scaleX(1.0077);">ttBinary</span>
<div class="a aci" style="left:605px;top:463px"></div>
<span class="t" style="left:624px;top:458.5px;color:#1E1E1E;transform:scaleX(0.8888);">TTDT_AUTOMATIC</span>
<div class="a aci" style="left:605px;top:482px"></div>
<span class="t" style="left:624px;top:477.5px;color:#1E1E1E;transform:scaleX(0.8664);">TTDT_AUTOPOP</span>
<div class="a aci" style="left:605px;top:501px"></div>
<span class="t" style="left:624px;top:496.5px;color:#1E1E1E;transform:scaleX(0.8716);">TTDT_INITIAL</span>
<div class="a" style="left:314px;top:827px;width:1313px;height:20px;background:#BCCADB;border-top:1px solid #A3ABBA;border-left:1px solid #A3ABBA;border-right:1px solid #A3ABBA;box-sizing:border-box;"></div>
<span class="t" style="left:318px;top:829px;color:#000;transform:scaleX(1.0546);">Output</span>
<svg class="a" style="left:1598px;top:832px" width="7" height="10" viewBox="0 0 7 10"><path d="M1 1H5V6H3V2H2V6H1ZM0 6H7V7H0ZM3 7H4V9.5H3Z" fill="#111"/></svg>
<svg class="a" style="left:1614.5px;top:833px" width="7" height="7" viewBox="0 0 7 7"><path d="M0.6 0.6L6.4 6.4M6.4 0.6L0.6 6.4" stroke="#111" stroke-width="1.45"/></svg>
<svg class="a" style="left:319px;top:852px" width="16" height="16" viewBox="0 0 16 16"><circle cx="10.5" cy="8.7" r="3.3" fill="none" stroke="#424242" stroke-width="1.3"/><path d="M8.2 11.2L4.2 15.2" stroke="#424242" stroke-width="1.9"/><path d="M3 3.5H7.5" stroke="#17589A" stroke-width="2.4"/><path d="M4.6 0.2L0.8 3.5L4.6 6.8Z" fill="#17589A"/></svg>
<svg class="a" style="left:341px;top:852px" width="16" height="16" viewBox="0 0 16 16"><circle cx="10.5" cy="8.7" r="3.3" fill="none" stroke="#424242" stroke-width="1.3"/><path d="M8.2 11.2L4.2 15.2" stroke="#424242" stroke-width="1.9"/><path d="M1 3.5H5.5" stroke="#17589A" stroke-width="2.4"/><path d="M3.9 0.2L7.7 3.5L3.9 6.8Z" fill="#17589A"/></svg>
<svg class="a" style="left:368px;top:852px" width="16" height="16" viewBox="0 0 16 16"><path d="M6.5 4.5V1.5H11.5L14 4V11.5H10" fill="none" stroke="#424242" stroke-width="1.2"/><path d="M2.5 5.5H7.5L10 8V15H2.5Z" fill="none" stroke="#424242" stroke-width="1.2"/></svg>
<svg class="a" style="left:390px;top:852px" width="16" height="16" viewBox="0 0 16 16"><path d="M2 2L14 14" stroke="#A1260D" stroke-width="2.6"/><path d="M14 2L2 14" stroke="#A1260D" stroke-width="2"/></svg>
<svg class="a" style="left:418px;top:852px" width="16" height="16" viewBox="0 0 16 16"><path d="M1.5 10V1.5H10" fill="none" stroke="#424242" stroke-width="1"/><path d="M3.5 12V3.5H12" fill="none" stroke="#424242" stroke-width="1"/><rect x="5.5" y="5.5" width="9" height="9" fill="#EEEEF2" stroke="#424242" stroke-width="1.1"/><path d="M7.5 10H12.5M10 7.5V12.5" stroke="#17589A" stroke-width="1.4"/></svg>
<svg class="a" style="left:440px;top:852px" width="16" height="16" viewBox="0 0 16 16"><path d="M1.5 10V1.5H10" fill="none" stroke="#424242" stroke-width="1"/><path d="M3.5 12V3.5H12" fill="none" stroke="#424242" stroke-width="1"/><rect x="5.5" y="5.5" width="9" height="9" fill="#EEEEF2" stroke="#424242" stroke-width="1.1"/><path d="M7.5 10H12.5" stroke="#17589A" stroke-width="1.4"/></svg>
<div class="a" style="left:362px;top:850px;width:1px;height:20px;background:#D1D1D8;"></div>
<div class="a" style="left:412px;top:850px;width:1px;height:20px;background:#D1D1D8;"></div>
<div class="a" style="left:314px;top:873px;width:1313px;height:120px;background:#FFFFFF;border:1px solid #7F8288;box-sizing:border-box;"></div>
<div class="a" style="left:1609px;top:875px;width:16px;height:117px;background:#F0F0F0;"></div>
<div class="a" style="left:1609px;top:957px;width:16px;height:17px;background:#CDCDCD;"></div>
<svg class="a" style="left:1612px;top:880px" width="10" height="8"><path d="M1 6.5L5 2.5L9 6.5" stroke="#4C4C4C" stroke-width="2.1" fill="none"/></svg>
<svg class="a" style="left:1612px;top:979px" width="10" height="8"><path d="M1 1.5L5 5.5L9 1.5" stroke="#4C4C4C" stroke-width="2.1" fill="none"/></svg>
<div class="a vdot" style="left:327px;top:875px;height:101px"></div>
<div class="a vdot" style="left:342px;top:875px;height:65px"></div>
<div class="a hdot" style="left:344px;top:885px;width:6px"></div>
<svg class="a" style="left:353px;top:878px" width="10" height="12" viewBox="0 0 10 12"><path d="M1.5 0.9L9 6L1.5 11.1Z" fill="#fff" stroke="#4A4A4A" stroke-width="1"/></svg>
<span class="t" style="left:372px;top:875px;transform:scaleX(0.9407);">Total Pages</span>
<span class="t" style="left:443.5px;top:875px;">:</span>
<span class="t" style="left:450px;top:875px;">0</span>
<div class="a hdot" style="left:344px;top:903px;width:6px"></div>
<svg class="a" style="left:353px;top:896px" width="10" height="12" viewBox="0 0 10 12"><path d="M1.5 0.9L9 6L1.5 11.1Z" fill="#fff" stroke="#4A4A4A" stroke-width="1"/></svg>
<span class="t" style="left:372px;top:893px;transform:scaleX(0.9199);">Static Data</span>
<span class="t" style="left:440px;top:893px;">:</span>
<span class="t" style="left:446px;top:893px;transform:scaleX(0.8740);">335133</span>
<div class="a hdot" style="left:344px;top:921px;width:6px"></div>
<svg class="a" style="left:353px;top:914px" width="10" height="12" viewBox="0 0 10 12"><path d="M1.5 0.9L9 6L1.5 11.1Z" fill="#fff" stroke="#4A4A4A" stroke-width="1"/></svg>
<span class="t" style="left:372px;top:911px;transform:scaleX(0.9139);">Message area</span>
<span class="t" style="left:452px;top:911px;">:</span>
<span class="t" style="left:458px;top:911px;transform:scaleX(0.8740);">210839</span>
<div class="a hdot" style="left:344px;top:939px;width:6px"></div>
<svg class="a" style="left:353px;top:932px" width="10" height="12" viewBox="0 0 10 12"><path d="M1.5 0.9L9 6L1.5 11.1Z" fill="#fff" stroke="#4A4A4A" stroke-width="1"/></svg>
<span class="t" style="left:372px;top:929px;transform:scaleX(0.9683);">Total Blocks</span>
<span class="t" style="left:443.5px;top:929px;">:</span>
<span class="t" style="left:450px;top:929px;transform:scaleX(0.8689);">13254</span>
<div class="a hdot" style="left:329px;top:957px;width:6px"></div>
<div class="a hdot" style="left:329px;top:975px;width:6px"></div>
<svg class="a" style="left:336px;top:949px" width="14" height="14" viewBox="0 0 14 14"><circle cx="7" cy="7" r="7" fill="#3A3A3C"/><rect x="4.2" y="4.2" width="5.6" height="5.6" fill="#F0F0F0"/></svg>
<span class="t" style="left:356.5px;top:947px;transform:scaleX(1.1574);">----</span>
<span class="t" style="left:376.7px;top:947px;transform:scaleX(0.9707);">Compile Finished</span>
<span class="t" style="left:468px;top:947px;transform:scaleX(1.2074);">----</span>
<div class="a" style="left:354px;top:965px;width:212px;height:18px;background:#E9E9EB;"></div>
<svg class="a" style="left:336px;top:967px" width="14" height="14" viewBox="0 0 14 14"><circle cx="7" cy="7" r="7" fill="#2585D0"/><rect x="6.1" y="5.6" width="1.9" height="5.8" fill="#fff"/><circle cx="7.05" cy="3.4" r="1.15" fill="#fff"/></svg>
<span class="t" style="left:356px;top:965px;transform:scaleX(0.9917);">Starting web application: WebListDemo</span>
<div class="a" style="left:316px;top:993px;width:68px;height:24px;background:#FAFAFB;"></div>
<div class="a" style="left:384px;top:995px;width:152px;height:21px;background:#EFEFF3;border:1px solid #E3E3E9;box-sizing:border-box;"></div>
<div class="a" style="left:536px;top:995px;width:90px;height:21px;background:#EFEFF3;border:1px solid #E3E3E9;box-sizing:border-box;"></div>
<div class="a" style="left:626px;top:995px;width:91px;height:21px;background:#EFEFF3;border:1px solid #E3E3E9;box-sizing:border-box;"></div>
<div class="a" style="left:717px;top:995px;width:205px;height:21px;background:#EFEFF3;border:1px solid #E3E3E9;box-sizing:border-box;"></div>
<svg class="a" style="left:319px;top:998px" width="16" height="16" viewBox="0 0 16 16"><path d="M8 1.6H1.6V14.4H8" fill="none" stroke="#424242" stroke-width="1.3"/><path d="M4 8H11" stroke="#424242" stroke-width="2.8"/><path d="M9.3 3L15.3 8L9.3 13Z" fill="#424242"/></svg>
<span class="t" style="left:338.5px;top:997px;transform:scaleX(1.0408);">Output</span>
<svg class="a" style="left:387px;top:997px" width="16" height="16" viewBox="0 0 16 16"><path d="M5.5 3.6H3.6V14.4H12.4V3.6H10.5" fill="none" stroke="#424242" stroke-width="1.2"/><path d="M5.7 4.5V3C5.7 0.8 10.3 0.8 10.3 3V4.5Z" fill="none" stroke="#424242" stroke-width="1.2"/><path d="M5.5 8.8L7.6 11.6L11.2 6" fill="none" stroke="#424242" stroke-width="1.9"/></svg>
<span class="t" style="left:406.5px;top:996px;transform:scaleX(0.9767);">To Do List [WebApp.src]</span>
<svg class="a" style="left:540px;top:997px" width="16" height="16" viewBox="0 0 16 16"><path d="M5.5 5.5V2.5H11.5L14.5 5.5V14H9" fill="none" stroke="#424242" stroke-width="1.2"/><path d="M11 2.2V6H14.8Z" fill="#424242"/><circle cx="6.6" cy="10.4" r="2.3" fill="#EEF3F9" stroke="#2B6CB0" stroke-width="1.3"/><path d="M5 12.2L2 15.2" stroke="#2B6CB0" stroke-width="1.8"/></svg>
<span class="t" style="left:560.5px;top:996px;transform:scaleX(0.9445);">Find Results</span>
<svg class="a" style="left:631px;top:997px" width="16" height="16" viewBox="0 0 16 16"><path d="M5 2H15.5V11.5H10.5" fill="none" stroke="#424242" stroke-width="1.1"/><rect x="4.5" y="1" width="11.5" height="3.2" fill="#424242"/><circle cx="5.3" cy="10.6" r="4.5" fill="#E2061A"/></svg>
<span class="t" style="left:651.5px;top:996px;transform:scaleX(0.9704);">Breakpoints</span>
<svg class="a" style="left:722px;top:997px" width="16" height="16" viewBox="0 0 16 16"><rect x="0.5" y="1.5" width="15" height="13" fill="#F7F7F9" stroke="#424242" stroke-width="1"/><rect x="0" y="1" width="16" height="3" fill="#424242"/><path d="M5.2 5.5L9 13H1.4Z" fill="#F6D94B"/><path d="M5.2 7.8V10.6M5.2 11.3V12.4" stroke="#222" stroke-width="1.2"/><path d="M9.3 9L11.4 11.3L14.6 6.2" fill="none" stroke="#424242" stroke-width="1.8"/></svg>
<span class="t" style="left:741.5px;top:996px;transform:scaleX(0.9897);">Problem Resolution [WebApp.src]</span>
<div class="a" style="left:1627px;top:100px;width:4px;height:918px;background:#F7F7F9;"></div>
<div class="a" style="left:1631px;top:101px;width:289px;height:20px;background:#BCCADB;border-top:1px solid #A3ABBA;border-left:1px solid #A3ABBA;border-right:1px solid #A3ABBA;box-sizing:border-box;"></div>
<span class="t" style="left:1635px;top:103px;color:#000;transform:scaleX(0.9738);">Workspace Explorer</span>
<svg class="a" style="left:1891px;top:106px" width="7" height="10" viewBox="0 0 7 10"><path d="M1 1H5V6H3V2H2V6H1ZM0 6H7V7H0ZM3 7H4V9.5H3Z" fill="#111"/></svg>
<svg class="a" style="left:1907.5px;top:107px" width="7" height="7" viewBox="0 0 7 7"><path d="M0.6 0.6L6.4 6.4M6.4 0.6L0.6 6.4" stroke="#111" stroke-width="1.45"/></svg>
<span class="t" style="left:1637px;top:129px;color:#000;transform:scaleX(0.9758);">Current Project:</span>
<div class="a" style="left:1726px;top:127px;width:193px;height:23px;background:#E3E3E6;border:1px solid #ADADB0;box-sizing:border-box;"></div>
<span class="t" style="left:1731px;top:129px;color:#000;transform:scaleX(0.9671);">WebApp.src</span>
<svg class="a" style="left:1904px;top:135px" width="12" height="8"><path d="M2 1.7L6 5.7L10 1.7" stroke="#333" stroke-width="1.1" fill="none"/></svg>
<div class="a" style="left:1631px;top:154px;width:289px;height:307px;background:#FFFFFF;border:1px solid #8E9199;box-sizing:border-box;"></div>
<div class="a vdot" style="left:1659px;top:174px;height:208px"></div>
<div class="a vdot" style="left:1674px;top:192px;height:137px"></div>
<svg class="a" style="left:1640px;top:161px" width="9" height="9" viewBox="0 0 9 9"><rect x="0.5" y="0.5" width="8" height="8" fill="#ECECF0" stroke="#8E8E96"/><path d="M2.5 4.5H6.5" stroke="#4A4A88" stroke-width="1"/></svg>
<div class="a hdot" style="left:1650px;top:165px;width:2px"></div>
<svg class="a" style="left:1651px;top:157px" width="16" height="16" viewBox="0 0 16 16"><path d="M5 1.5H15.5V12.5H10" fill="none" stroke="#424242" stroke-width="1.1"/><rect x="2.5" y="1" width="13.5" height="2.5" fill="#424242"/><circle cx="5.5" cy="11.5" r="4.5" fill="#fff" stroke="#424242" stroke-width="1.2"/><path d="M1.0 11.5H10.0M5.5 7.0V16.0M3.5 7.5V15.5M7.5 7.5V15.5M1.5 9.5H9.5M1.5 13.5H9.5" stroke="#424242" stroke-width="1" fill="none"/></svg>
<span class="t" style="left:1673.5px;top:156px;transform:scaleX(0.9748);">WebApp.src</span>
<svg class="a" style="left:1655px;top:180px" width="9" height="9" viewBox="0 0 9 9"><rect x="0.5" y="0.5" width="8" height="8" fill="#ECECF0" stroke="#8E8E96"/><path d="M2.5 4.5H6.5" stroke="#4A4A88" stroke-width="1"/></svg>
<div class="a hdot" style="left:1665px;top:184px;width:2px"></div>
<svg class="a" style="left:1667px;top:175px" width="16" height="16" viewBox="0 0 16 16"><path d="M5 1.5H15.5V12.5H10" fill="none" stroke="#424242" stroke-width="1.1"/><rect x="2.5" y="1" width="13.5" height="2.5" fill="#424242"/><path d="M8 5.5H12.5M11.5 8H13.5M11.5 10.5H13.5" stroke="#424242" stroke-width="1.3"/><circle cx="5.5" cy="11.5" r="4.5" fill="#fff" stroke="#424242" stroke-width="1.2"/><path d="M1.0 11.5H10.0M5.5 7.0V16.0M3.5 7.5V15.5M7.5 7.5V15.5M1.5 9.5H9.5M1.5 13.5H9.5" stroke="#424242" stroke-width="1" fill="none"/></svg>
<span class="t" style="left:1688.5px;top:174px;transform:scaleX(0.9472);">Web Views (8)</span>
<div class="a hdot" style="left:1675px;top:202px;width:6px"></div>
<svg class="a" style="left:1685px;top:195px" width="10" height="12" viewBox="0 0 10 12"><path d="M0.6 0.6H6L9.4 4V11.4H0.6Z" fill="#fff" stroke="#424242" stroke-width="1.1"/><path d="M5.5 0.5V4.5H9.5Z" fill="#424242"/><path d="M2.3 5.5H4.5M2.3 7.5H7.7M2.3 9.5H7.7" stroke="#424242" stroke-width="1"/><path d="M2.3 3.5H4" stroke="#424242" stroke-width="1"/></svg>
<span class="t" style="left:1703.5px;top:192px;transform:scaleX(1.0009);">ClientSortingDemo.wo</span>
<div class="a hdot" style="left:1675px;top:220px;width:6px"></div>
<div class="a" style="left:1701px;top:211px;width:80px;height:17px;background:#E9E9EC;"></div>
<svg class="a" style="left:1685px;top:213px" width="10" height="12" viewBox="0 0 10 12"><path d="M0.6 0.6H6L9.4 4V11.4H0.6Z" fill="#fff" stroke="#424242" stroke-width="1.1"/><path d="M5.5 0.5V4.5H9.5Z" fill="#424242"/><path d="M2.3 5.5H4.5M2.3 7.5H7.7M2.3 9.5H7.7" stroke="#424242" stroke-width="1"/><path d="M2.3 3.5H4" stroke="#424242" stroke-width="1"/></svg>
<span class="t" style="left:1703.5px;top:210px;transform:scaleX(0.9756);">Dashboard.wo</span>
<div class="a hdot" style="left:1675px;top:238px;width:6px"></div>
<svg class="a" style="left:1685px;top:231px" width="10" height="12" viewBox="0 0 10 12"><path d="M0.6 0.6H6L9.4 4V11.4H0.6Z" fill="#fff" stroke="#424242" stroke-width="1.1"/><path d="M5.5 0.5V4.5H9.5Z" fill="#424242"/><path d="M2.3 5.5H4.5M2.3 7.5H7.7M2.3 9.5H7.7" stroke="#424242" stroke-width="1"/><path d="M2.3 3.5H4" stroke="#424242" stroke-width="1"/></svg>
<span class="t" style="left:1703.5px;top:228px;transform:scaleX(0.9707);">ExpandPanelDemo.wo</span>
<div class="a hdot" style="left:1675px;top:256px;width:6px"></div>
<svg class="a" style="left:1685px;top:249px" width="10" height="12" viewBox="0 0 10 12"><path d="M0.6 0.6H6L9.4 4V11.4H0.6Z" fill="#fff" stroke="#424242" stroke-width="1.1"/><path d="M5.5 0.5V4.5H9.5Z" fill="#424242"/><path d="M2.3 5.5H4.5M2.3 7.5H7.7M2.3 9.5H7.7" stroke="#424242" stroke-width="1"/><path d="M2.3 3.5H4" stroke="#424242" stroke-width="1"/></svg>
<span class="t" style="left:1703.5px;top:246px;transform:scaleX(1.0109);">InfiniteScrollingDemo.wo</span>
<div class="a hdot" style="left:1675px;top:274px;width:6px"></div>
<svg class="a" style="left:1685px;top:267px" width="10" height="12" viewBox="0 0 10 12"><path d="M0.6 0.6H6L9.4 4V11.4H0.6Z" fill="#fff" stroke="#424242" stroke-width="1.1"/><path d="M5.5 0.5V4.5H9.5Z" fill="#424242"/><path d="M2.3 5.5H4.5M2.3 7.5H7.7M2.3 9.5H7.7" stroke="#424242" stroke-width="1"/><path d="M2.3 3.5H4" stroke="#424242" stroke-width="1"/></svg>
<span class="t" style="left:1703.5px;top:264px;transform:scaleX(1.0094);">Login.wo</span>
<div class="a hdot" style="left:1675px;top:292px;width:6px"></div>
<svg class="a" style="left:1685px;top:285px" width="10" height="12" viewBox="0 0 10 12"><path d="M0.6 0.6H6L9.4 4V11.4H0.6Z" fill="#fff" stroke="#424242" stroke-width="1.1"/><path d="M5.5 0.5V4.5H9.5Z" fill="#424242"/><path d="M2.3 5.5H4.5M2.3 7.5H7.7M2.3 9.5H7.7" stroke="#424242" stroke-width="1"/><path d="M2.3 3.5H4" stroke="#424242" stroke-width="1"/></svg>
<span class="t" style="left:1703.5px;top:282px;transform:scaleX(0.9915);">ManualLoadedListDemo.wo</span>
<div class="a hdot" style="left:1675px;top:310px;width:6px"></div>
<svg class="a" style="left:1685px;top:303px" width="10" height="12" viewBox="0 0 10 12"><path d="M0.6 0.6H6L9.4 4V11.4H0.6Z" fill="#fff" stroke="#424242" stroke-width="1.1"/><path d="M5.5 0.5V4.5H9.5Z" fill="#424242"/><path d="M2.3 5.5H4.5M2.3 7.5H7.7M2.3 9.5H7.7" stroke="#424242" stroke-width="1"/><path d="M2.3 3.5H4" stroke="#424242" stroke-width="1"/></svg>
<span class="t" style="left:1703.5px;top:300px;transform:scaleX(0.9890);">RowLayoutDemo.wo</span>
<div class="a hdot" style="left:1675px;top:328px;width:6px"></div>
<svg class="a" style="left:1685px;top:321px" width="10" height="12" viewBox="0 0 10 12"><path d="M0.6 0.6H6L9.4 4V11.4H0.6Z" fill="#fff" stroke="#424242" stroke-width="1.1"/><path d="M5.5 0.5V4.5H9.5Z" fill="#424242"/><path d="M2.3 5.5H4.5M2.3 7.5H7.7M2.3 9.5H7.7" stroke="#424242" stroke-width="1"/><path d="M2.3 3.5H4" stroke="#424242" stroke-width="1"/></svg>
<span class="t" style="left:1703.5px;top:318px;transform:scaleX(0.9979);">ScrollingDemo.wo</span>
<svg class="a" style="left:1655px;top:342px" width="9" height="9" viewBox="0 0 9 9"><rect x="0.5" y="0.5" width="8" height="8" fill="#ECECF0" stroke="#8E8E96"/><path d="M2.5 4.5H6.5M4.5 2.5V6.5" stroke="#4A4A88" stroke-width="1"/></svg>
<div class="a hdot" style="left:1665px;top:346px;width:2px"></div>
<svg class="a" style="left:1667px;top:337px" width="16" height="16" viewBox="0 0 16 16"><circle cx="5.5" cy="10.5" r="4.5" fill="#fff" stroke="#424242" stroke-width="1.2"/><path d="M1.0 10.5H10.0M5.5 6.0V15.0M3.5 6.5V14.5M7.5 6.5V14.5M1.5 8.5H9.5M1.5 12.5H9.5" stroke="#424242" stroke-width="1" fill="none"/><circle cx="11.7" cy="4.7" r="2.9" fill="#fff" stroke="#424242" stroke-width="1"/><path d="M11.7 7.2V4.8M10.2 3.3L11.7 4.8L13.2 3.3" stroke="#424242" stroke-width=".9" fill="none"/></svg>
<span class="t" style="left:1688.5px;top:336px;transform:scaleX(0.9882);">Web Components (2)</span>
<svg class="a" style="left:1655px;top:360px" width="9" height="9" viewBox="0 0 9 9"><rect x="0.5" y="0.5" width="8" height="8" fill="#ECECF0" stroke="#8E8E96"/><path d="M2.5 4.5H6.5M4.5 2.5V6.5" stroke="#4A4A88" stroke-width="1"/></svg>
<div class="a hdot" style="left:1665px;top:364px;width:2px"></div>
<svg class="a" style="left:1667px;top:355px" width="16" height="16" viewBox="0 0 16 16"><path d="M1.5 3.5H7.6V12.5H1.5ZM8.4 3.5H14.5V12.5H8.4Z" fill="#fff" stroke="#424242" stroke-width="1.1"/><path d="M8 3.5V13" stroke="#424242" stroke-width="1.4"/><path d="M6 13.3H10" stroke="#424242" stroke-width="1"/></svg>
<span class="t" style="left:1688.5px;top:354px;transform:scaleX(0.9646);">Data Dictionaries (3)</span>
<svg class="a" style="left:1655px;top:378px" width="9" height="9" viewBox="0 0 9 9"><rect x="0.5" y="0.5" width="8" height="8" fill="#ECECF0" stroke="#8E8E96"/><path d="M2.5 4.5H6.5M4.5 2.5V6.5" stroke="#4A4A88" stroke-width="1"/></svg>
<div class="a hdot" style="left:1665px;top:382px;width:2px"></div>
<svg class="a" style="left:1667px;top:373px" width="16" height="16" viewBox="0 0 16 16"><path d="M6.5 2.2H11.5C13 2.2 14.3 3.5 14.3 5V11.5" fill="none" stroke="#424242" stroke-width="1"/><path d="M5 3.9H10C11.5 3.9 12.6 5 12.6 6.5V13.2" fill="none" stroke="#424242" stroke-width="1"/><path d="M2.6 5.6H8.2L10.9 8.3V15.4H2.6Z" fill="#fff" stroke="#424242" stroke-width="1.1"/><path d="M4.5 9.5H7M4.5 11.5H9M4.5 13.5H9" stroke="#424242" stroke-width="1"/></svg>
<span class="t" style="left:1688.5px;top:372px;transform:scaleX(0.9519);">Other Files (11)</span>
<div class="a" style="left:1631px;top:466px;width:289px;height:20px;background:#BCCADB;border-top:1px solid #A3ABBA;border-left:1px solid #A3ABBA;border-right:1px solid #A3ABBA;box-sizing:border-box;"></div>
<span class="t" style="left:1635px;top:468px;color:#000;transform:scaleX(0.9779);">Properties (Inactive)</span>
<svg class="a" style="left:1891px;top:471px" width="7" height="10" viewBox="0 0 7 10"><path d="M1 1H5V6H3V2H2V6H1ZM0 6H7V7H0ZM3 7H4V9.5H3Z" fill="#111"/></svg>
<svg class="a" style="left:1907.5px;top:472px" width="7" height="7" viewBox="0 0 7 7"><path d="M0.6 0.6L6.4 6.4M6.4 0.6L0.6 6.4" stroke="#111" stroke-width="1.45"/></svg>
<div class="a" style="left:1674px;top:493px;width:240px;height:24px;background:#F0F0F0;border:1px solid #D9D9D9;box-sizing:border-box;"></div>
<div class="a" style="left:1674px;top:526px;width:240px;height:24px;background:#F0F0F0;border:1px solid #D9D9D9;box-sizing:border-box;"></div>
<div class="a" style="left:1632px;top:564px;width:284px;height:427px;background:#EFEFEF;border:1px solid #E3E3E3;box-sizing:border-box;"></div>
<span class="t" style="left:1726px;top:572px;color:#000;font-weight:bold;transform:scaleX(1.0002);">Nothing to Model</span>
<span class="t" style="left:1641.5px;top:602px;color:#000;transform:scaleX(0.9781);">No object, class or table is currently selected.</span>
<span class="t" style="left:1641.5px;top:632px;color:#000;transform:scaleX(1.0329);">Hint:</span>
<span class="t" style="left:1642.5px;top:654.5px;color:#000;font-size:15px;">•</span>
<span class="t" style="left:1650px;top:655px;color:#000;transform:scaleX(0.9575);">Select an object or a class via</span>
<span class="t" style="left:1805px;top:655px;color:#1B6EC2;transform:scaleX(0.9646);text-decoration:underline;">Code Explorer</span>
<span class="t" style="left:1882.5px;top:655px;color:#000;transform:scaleX(0.9839);">or</span>
<span class="t" style="left:1650px;top:670px;color:#000;transform:scaleX(0.9778);">the Visual Designer to view its properties.</span>
<span class="t" style="left:1642.5px;top:692.5px;color:#000;font-size:15px;">•</span>
<span class="t" style="left:1650px;top:693px;color:#000;transform:scaleX(0.9900);">In the Code Editor position the cursor inside an</span>
<span class="t" style="left:1650px;top:708px;color:#000;transform:scaleX(0.9716);">object or a class declaration and press Ctrl+F7.</span>
<span class="t" style="left:1642.5px;top:730.5px;color:#000;font-size:15px;">•</span>
<span class="t" style="left:1650px;top:731px;color:#000;transform:scaleX(0.9484);">Select a Table via</span>
<span class="t" style="left:1742px;top:731px;color:#1B6EC2;transform:scaleX(0.9646);text-decoration:underline;">Table Explorer</span>
<span class="t" style="left:1819.5px;top:731px;color:#000;transform:scaleX(0.9840);">or the Table</span>
<span class="t" style="left:1650px;top:746px;color:#000;transform:scaleX(0.9995);">Editor to view its attribute properties.</span>
<div class="a" style="left:1631px;top:993px;width:136px;height:24px;background:#FBFBFC;"></div>
<div class="a" style="left:1767px;top:995px;width:145px;height:21px;background:#EFEFF3;border:1px solid #E3E3E9;box-sizing:border-box;"></div>
<svg class="a" style="left:1635px;top:998px" width="16" height="16" viewBox="0 0 16 16"><rect x="4.5" y="1.5" width="10.5" height="13" fill="#EEEEF2" stroke="#424242" stroke-width="1.1"/><path d="M6.5 4H9M10.5 4H13.5M6.5 6.5H9M10.5 6.5H13.5M6.5 9H9M10.5 9H13.5M6.5 11.5H9M10.5 11.5H13.5" stroke="#424242" stroke-width="1.2"/><path d="M1 8H6V10.5C6 12 5 12.5 4.2 12.5V15.5H2.8V12.5C2 12.5 1 12 1 10.5Z" fill="#424242" stroke="#EEEEF2" stroke-width=".6"/><path d="M2.3 6V8M4.7 6V8" stroke="#424242" stroke-width="1"/></svg>
<span class="t" style="left:1655px;top:997px;transform:scaleX(0.9779);">Properties (Inactive)</span>
<svg class="a" style="left:1771px;top:997px" width="16" height="16" viewBox="0 0 16 16"><path d="M8.5 1.5C8.5 0 15.5 0 15.5 1.5V8C15.5 9.8 8.5 9.8 8.5 8Z" fill="#424242"/><ellipse cx="12" cy="1.8" rx="2.7" ry="0.8" fill="#EEEEF2"/><rect x="4" y="5" width="3" height="3" fill="#424242"/><path d="M5.5 8V11.5M2 14V11.5H9V14" stroke="#424242" stroke-width="1.1" fill="none"/><rect x="0.5" y="13" width="3" height="2.5" fill="#424242"/><rect x="7.5" y="13" width="3" height="2.5" fill="#424242"/></svg>
<span class="t" style="left:1790px;top:996px;transform:scaleX(0.9668);">DDO Explorer [Client...</span>
<div class="a" style="left:0px;top:1018px;width:1920px;height:22px;background:#0E7ACA;"></div>
<span class="t" style="left:3.5px;top:1021px;color:#FFFFFF;transform:scaleX(1.0092);">C:\projects\WebListDemo\AppSrc\ClientSortingDemo.wo</span>
<span class="t" style="left:1537.5px;top:1021px;color:#FFFFFF;transform:scaleX(0.9157);">Ln 41</span>
<span class="t" style="left:1577.5px;top:1021px;color:#FFFFFF;transform:scaleX(0.9658);">Col 37</span>
<svg class="a" style="left:1690.5px;top:1021.5px" width="17" height="17" viewBox="0 0 17 17"><circle cx="8.5" cy="8.5" r="8.2" fill="#F3E4E6"/><circle cx="8.5" cy="8.5" r="6.6" fill="#fff" stroke="#CF2030" stroke-width="1.5"/><rect x="7.6" y="4" width="1.9" height="6" fill="#CF2030"/><rect x="7.6" y="11.2" width="1.9" height="2" fill="#CF2030"/></svg>
<svg class="a" style="left:1758.5px;top:1021.5px" width="17" height="17" viewBox="0 0 17 17"><circle cx="8.5" cy="8.5" r="8.2" fill="#E6ECF2"/><circle cx="8.5" cy="8.5" r="5.8" fill="#fff" stroke="#7C7C7C" stroke-width="2.2"/><path d="M4.4 4.4L12.6 12.6" stroke="#7C7C7C" stroke-width="2.2"/></svg>
<span class="t" style="left:1793px;top:1021px;color:#FFFFFF;transform:scaleX(0.9493);">INS</span>
<span class="t" style="left:1837.5px;top:1021px;color:#62B0EA;transform:scaleX(0.9025);">CAPS</span>
<span class="t" style="left:1881px;top:1021px;color:#FFFFFF;transform:scaleX(1.0429);">NUM</span>
<div class="a" style="left:0px;top:1040px;width:1920px;height:40px;background:#1D418C;"></div>
<div class="a" style="left:196px;top:1040px;width:48px;height:40px;background:#2A55A6;"></div>
<div class="a" style="left:151px;top:1078px;width:40px;height:2px;background:#8FA8D6;"></div>
<div class="a" style="left:196px;top:1078px;width:48px;height:2px;background:#9DB4DE;"></div>
<svg class="a" style="left:16px;top:1052px" width="16" height="16" viewBox="0 0 16 16"><path d="M0 2.3L6.6 1.4V7.6H0ZM7.4 1.3L16 0V7.6H7.4ZM0 8.4H6.6V14.6L0 13.7ZM7.4 8.4H16V16L7.4 14.7Z" fill="#fff"/></svg>
<svg class="a" style="left:63.5px;top:1050.5px" width="17" height="17" viewBox="0 0 17 17"><circle cx="10.5" cy="6.5" r="5.2" fill="none" stroke="#fff" stroke-width="1.5"/><path d="M6.8 10.2L0.8 16.2" stroke="#fff" stroke-width="1.6"/></svg>
<svg class="a" style="left:111.5px;top:1052px" width="17" height="16" viewBox="0 0 17 16"><path d="M1 1.5H12.5M1 14.5H12.5M15.5 1V3M15.5 13V15M15.5 5.5V10.5" stroke="#fff" stroke-width="1.2"/><rect x="2.5" y="4.5" width="8.5" height="7" fill="none" stroke="#fff" stroke-width="1.3"/><path d="M1.5 1V4M1.5 12V15M12 1V4M12 12V15" stroke="#fff" stroke-width="1.1"/></svg>
<svg class="a" style="left:159px;top:1048px" width="24" height="24" viewBox="0 0 24 24"><circle cx="12" cy="12" r="11.5" fill="#E34133"/><path d="M12 12L2.2 6.2A11.5 11.5 0 0 0 11 23.5Z" fill="#2FA24F"/><path d="M12 12L11 23.5A11.5 11.5 0 0 0 22.2 6.5L12 6.5Z" fill="#F9C31B"/><path d="M12 6.5H22.2A11.5 11.5 0 0 0 2.2 6.2L7.3 14.8Z" fill="#E34133"/><circle cx="12" cy="12" r="5.3" fill="#F1F1F1"/><circle cx="12" cy="12" r="4.2" fill="#4A87EE"/></svg>
<svg class="a" style="left:208px;top:1048px" width="24" height="24" viewBox="0 0 24 24"><path d="M0 0H24V19L19 24H0Z" fill="#D93A0E"/><path d="M4.5 6.5H9C12.5 6.5 12.5 17.5 9 17.5H4.5V12M13.8 18V6.5H20M13.8 12H19" stroke="#fff" stroke-width="2.3" fill="none"/></svg>
</div>
</body></html>
